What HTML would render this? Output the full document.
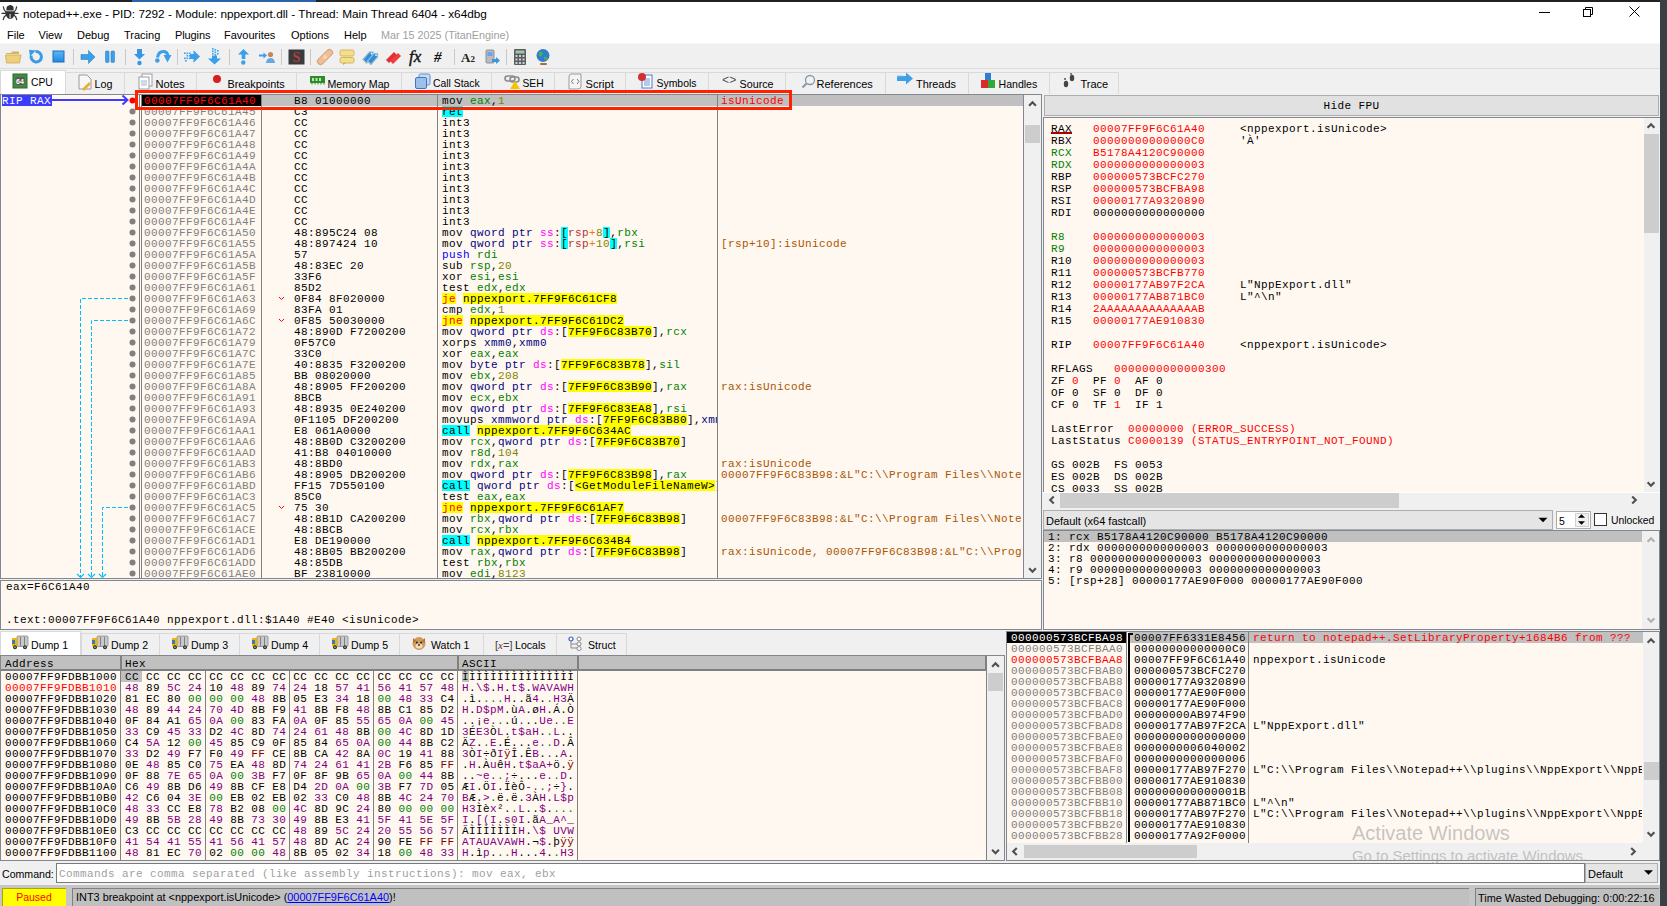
<!DOCTYPE html><html><head><meta charset="utf-8"><style>
*{margin:0;padding:0;box-sizing:border-box}
html,body{width:1667px;height:906px;overflow:hidden;background:#f0f0f0;position:relative}
div{position:absolute}
.s{font-family:'Liberation Sans', sans-serif;font-size:12px;line-height:14px;white-space:pre;color:#000}
.m{font-family:'Liberation Mono', monospace;font-size:11px;letter-spacing:0.4px;line-height:11px;height:11px;white-space:pre;color:#000}
</style></head><body>
<div style="left:0px;top:0px;width:1667px;height:44px;background:#fff"></div>
<div style="left:0px;top:0px;width:1667px;height:2px;background:#1f2224"></div>
<div style="left:132px;top:0px;width:184px;height:2px;background:#2b63a8"></div>
<svg width="22" height="22" viewBox="0 0 22 22" style="position:absolute;left:0px;top:0px"><path d="M6.4 10.6 Q6 6.5 8.2 5.8 Q9.5 5 10.2 5 Q11 5 12.3 5.8 Q14 6.5 13.6 10.6 Z" fill="#333"/><path d="M5.4 11.3 H14.8 Q15.2 15 13 17.5 Q11.5 19 10.1 19 Q8.6 19 7.2 17.5 Q5 15 5.4 11.3Z" fill="#333"/><rect x="9.3" y="13" width="1.7" height="5.5" fill="#a8a8a8"/><path d="M3.4 7 Q3.8 10.5 6 12 M16.6 7 Q16.2 10.5 14 12 M2 13.4 H18 M6 15.3 Q3.8 16.5 3.3 19.5 M14 15.3 Q16.2 16.5 16.7 19.5" stroke="#333" stroke-width="1.3" fill="none" stroke-linecap="round"/></svg>
<div class="s" style="left:23px;top:7px;font-size:11.8px">notepad++.exe - PID: 7292 - Module: nppexport.dll - Thread: Main Thread 6404 - x64dbg</div>
<div style="left:1539px;top:12px;width:11px;height:1px;background:#000"></div>
<svg width="14" height="12" viewBox="0 0 14 12" style="position:absolute;left:1582px;top:6px"><rect x="1.5" y="3.5" width="7" height="7" fill="none" stroke="#000" stroke-width="1"/><path d="M3.5 3.5 V1.5 H10.5 V8.5 H8.5" fill="none" stroke="#000" stroke-width="1"/></svg>
<svg width="14" height="12" viewBox="0 0 14 12" style="position:absolute;left:1628px;top:6px"><path d="M1.5 0.5 L11.5 10.5 M11.5 0.5 L1.5 10.5" stroke="#000" stroke-width="1"/></svg>
<div class="s" style="left:7px;top:28px;font-size:11px;letter-spacing:0px">File</div>
<div class="s" style="left:38.5px;top:28px;font-size:11px;letter-spacing:0px">View</div>
<div class="s" style="left:77px;top:28px;font-size:11px;letter-spacing:0px">Debug</div>
<div class="s" style="left:124px;top:28px;font-size:11px;letter-spacing:0px">Tracing</div>
<div class="s" style="left:175px;top:28px;font-size:11px;letter-spacing:-0.1px">Plugins</div>
<div class="s" style="left:224px;top:28px;font-size:11px;letter-spacing:0px">Favourites</div>
<div class="s" style="left:291px;top:28px;font-size:11px;letter-spacing:0px">Options</div>
<div class="s" style="left:344px;top:28px;font-size:11px;letter-spacing:0px">Help</div>
<div class="s" style="left:381px;top:28px;font-size:10.8px;color:#a0a0a0">Mar 15 2025 (TitanEngine)</div>
<div style="left:0px;top:44px;width:1660px;height:25px;background:#f0f0f0"></div>
<div style="left:0px;top:43px;width:1660px;height:1px;background:#f7f7f7"></div>
<div style="left:0px;top:68px;width:1660px;height:1px;background:#dcdcdc"></div>
<div style="left:73px;top:49px;width:1px;height:16px;background:#c8c8c8"></div>
<div style="left:125px;top:49px;width:1px;height:16px;background:#c8c8c8"></div>
<div style="left:177px;top:49px;width:1px;height:16px;background:#c8c8c8"></div>
<div style="left:229px;top:49px;width:1px;height:16px;background:#c8c8c8"></div>
<div style="left:281px;top:49px;width:1px;height:16px;background:#c8c8c8"></div>
<div style="left:310px;top:49px;width:1px;height:16px;background:#c8c8c8"></div>
<div style="left:454px;top:49px;width:1px;height:16px;background:#c8c8c8"></div>
<div style="left:506px;top:49px;width:1px;height:16px;background:#c8c8c8"></div>
<svg width="17" height="16" viewBox="0 0 17 16" style="position:absolute;left:5px;top:49px"><path d="M1 4 H6 L7.5 2.5 H14 V5 H1Z" fill="#d9b25a"/><path d="M0.5 6 H16 L14.5 14 H1.5 Z" fill="#f0cf7a" stroke="#c9a24a" stroke-width="0.7"/></svg>
<svg width="16" height="16" viewBox="0 0 16 16" style="position:absolute;left:28px;top:49px"><path d="M3.2 6.5 A5.2 5.2 0 1 0 7.5 2.6" fill="none" stroke="#3b9be8" stroke-width="3"/><path d="M1 0.8 L7.8 1.6 L2 7.6 Z" fill="#3b9be8"/></svg>
<svg width="13" height="13" viewBox="0 0 13 13" style="position:absolute;left:52px;top:50px"><defs><linearGradient id="gs" x1="0" y1="0" x2="0" y2="1"><stop offset="0" stop-color="#5fb8f5"/><stop offset="1" stop-color="#1e88e0"/></linearGradient></defs><rect x="1" y="1" width="11" height="11" fill="url(#gs)" stroke="#1a6cc0" stroke-width="1"/></svg>
<svg width="16" height="16" viewBox="0 0 16 16" style="position:absolute;left:80px;top:49px"><path d="M1 5.5 H8.5 V1.5 L15 8 L8.5 14.5 V10.5 H1 Z" fill="#3aa0ea" stroke="#2a80d0" stroke-width="0.6"/></svg>
<svg width="13" height="14" viewBox="0 0 13 14" style="position:absolute;left:104px;top:50px"><rect x="1.5" y="1" width="3.5" height="11.5" rx="1" fill="#3aa0ea" stroke="#2a80d0" stroke-width="0.6"/><rect x="7" y="1" width="3.5" height="11.5" rx="1" fill="#3aa0ea" stroke="#2a80d0" stroke-width="0.6"/></svg>
<svg width="15" height="18" viewBox="0 0 15 18" style="position:absolute;left:132px;top:48px"><path d="M5 1 H10 V6 H13 L7.5 11.5 L2 6 H5 Z" fill="#3597e6"/><circle cx="7.5" cy="15" r="2.2" fill="#3597e6"/></svg>
<svg width="20" height="16" viewBox="0 0 20 16" style="position:absolute;left:153px;top:49px"><path d="M4.5 8.5 Q5.5 2 11 2.5 Q14.5 3 15 7" fill="none" stroke="#3aa0ea" stroke-width="3"/><path d="M10.5 6 H18.5 L14.5 13.5 Z" fill="#3aa0ea"/><circle cx="4.3" cy="11.5" r="2.3" fill="#3aa0ea"/></svg>
<svg width="18" height="16" viewBox="0 0 18 16" style="position:absolute;left:183px;top:49px"><path d="M7 5 H10.5 V1.2 L17 7.5 L10.5 13.8 V10 H7 Z" fill="#3aa0ea"/><g fill="#3aa0ea"><rect x="1" y="3.5" width="1.6" height="1.6"/><rect x="3.5" y="3.5" width="1.6" height="1.6"/><rect x="6" y="3.5" width="1.6" height="1.6"/><rect x="3.5" y="6" width="1.6" height="1.6"/><rect x="6" y="6" width="1.6" height="1.6"/><rect x="1" y="8.5" width="1.6" height="1.6"/><rect x="3.5" y="8.5" width="1.6" height="1.6"/><rect x="6" y="8.5" width="1.6" height="1.6"/><rect x="2" y="11" width="1.6" height="1.6"/></g></svg>
<svg width="16" height="19" viewBox="0 0 16 19" style="position:absolute;left:207px;top:46px"><path d="M5 9.5 H10 V12.5 H14 L7.5 18.5 L1 12.5 H5 Z" fill="#3aa0ea"/><g fill="#3aa0ea"><rect x="5" y="2" width="1.6" height="1.6"/><rect x="7.5" y="3" width="1.6" height="1.6"/><rect x="10" y="4" width="1.6" height="1.6"/><rect x="5" y="4.5" width="1.6" height="1.6"/><rect x="7.5" y="5.5" width="1.6" height="1.6"/><rect x="5" y="7" width="1.6" height="1.6"/><rect x="7.5" y="8" width="1.6" height="1.6"/><rect x="10" y="7" width="1.6" height="1.6"/></g></svg>
<svg width="15" height="18" viewBox="0 0 15 18" style="position:absolute;left:236px;top:48px"><path d="M7.5 1 L13 6.5 H9.3 V11 H5.7 V6.5 H2 Z" fill="#3aa0ea"/><circle cx="7.3" cy="14.5" r="2.2" fill="#3aa0ea"/></svg>
<svg width="18" height="13" viewBox="0 0 18 13" style="position:absolute;left:258px;top:51px"><path d="M1 3.5 H5.5 V1.5 L9 4.5 L5.5 7.5 V5.5 H1 Z" fill="#3aa0ea"/><circle cx="12.5" cy="3.5" r="2.6" fill="#c4875a"/><path d="M8 12 Q8.5 7 12.5 7 Q16.5 7 17 12 Z" fill="#6aa8e0"/></svg>
<svg width="17" height="16" viewBox="0 0 17 16" style="position:absolute;left:288px;top:49px"><rect x="0.5" y="0.5" width="16" height="15" fill="#3a3a3a"/><text x="8.5" y="13" font-family="Liberation Serif" font-weight="bold" font-size="14" fill="#b04040" text-anchor="middle">S</text></svg>
<svg width="20" height="20" viewBox="0 0 20 20" style="position:absolute;left:315px;top:47px"><rect x="0.5" y="6.8" width="19" height="6.4" rx="3.2" transform="rotate(-45 10 10)" fill="#efbd96" stroke="#c98d62" stroke-width="0.8"/><rect x="8.3" y="8.3" width="3.4" height="3.4" transform="rotate(45 10 10)" fill="#f7d7a8"/></svg>
<svg width="17" height="16" viewBox="0 0 17 16" style="position:absolute;left:339px;top:49px"><rect x="1" y="1" width="14" height="6" rx="1.5" fill="#f4e08a" stroke="#c9a94a" stroke-width="0.8"/><rect x="1" y="8.5" width="14" height="5.5" rx="1.5" fill="#f4e08a" stroke="#c9a94a" stroke-width="0.8"/><path d="M4 14 L4 16 L7 14Z" fill="#c9a94a"/></svg>
<svg width="17" height="16" viewBox="0 0 17 16" style="position:absolute;left:362px;top:49px"><path d="M1 10.5 L7.5 3 H11 V6.5 L4.5 14 Z" fill="#2a8ee0" stroke="#9ab8c8" stroke-width="1.2"/><path d="M5.5 12 L12 4.5 H15.5 V8 L9 15.5 Z" fill="#2a8ee0" stroke="#9ab8c8" stroke-width="1.2"/><circle cx="9.6" cy="4.6" r="0.9" fill="#fff"/><circle cx="14" cy="6.1" r="0.9" fill="#fff"/></svg>
<svg width="17" height="16" viewBox="0 0 17 16" style="position:absolute;left:385px;top:49px"><path d="M1 11 L9 3 L12 6 L4 14 Z" fill="#e03030"/><path d="M5 12 L13 4 L16 7 L8 15 Z" fill="#ee3b3b"/></svg>
<div class="s" style="left:409px;top:48px;font-family:'Liberation Serif';font-size:17px;line-height:17px;color:#111;-webkit-text-stroke:0.4px #111"><i>fx</i></div>
<div class="s" style="left:434px;top:49px;font-family:'Liberation Serif';font-weight:bold;font-size:15px;line-height:16px;color:#111;font-style:italic">#</div>
<div class="s" style="left:461px;top:50px;font-family:'Liberation Serif';font-weight:bold;font-size:13px;line-height:16px;color:#222">A<span style='font-size:9px'>2</span></div>
<svg width="17" height="18" viewBox="0 0 17 18" style="position:absolute;left:484px;top:48px"><rect x="2" y="2" width="8" height="13" rx="1" fill="#b8bcc2" stroke="#7a7f86" stroke-width="0.8"/><rect x="3.5" y="4" width="5" height="4" fill="#6aa7e0"/><path d="M8 11 H12 V9 L16 12.5 L12 16 V14 H8 Z" fill="#3597e6"/></svg>
<svg width="15" height="18" viewBox="0 0 15 18" style="position:absolute;left:513px;top:48px"><rect x="1" y="1" width="12" height="16" rx="1" fill="#5a5e62"/><rect x="2.5" y="2.5" width="9" height="3" fill="#9fc8a0"/><g fill="#d0d0d0"><rect x="2.5" y="7" width="2" height="2"/><rect x="6" y="7" width="2" height="2"/><rect x="9.5" y="7" width="2" height="2"/><rect x="2.5" y="10.5" width="2" height="2"/><rect x="6" y="10.5" width="2" height="2"/><rect x="9.5" y="10.5" width="2" height="2"/><rect x="2.5" y="14" width="2" height="2"/><rect x="6" y="14" width="2" height="2"/><rect x="9.5" y="14" width="2" height="2"/></g></svg>
<svg width="17" height="18" viewBox="0 0 17 18" style="position:absolute;left:535px;top:48px"><circle cx="8" cy="7.5" r="6.5" fill="#2f7fd0"/><path d="M4 4 Q7 3 8 6 Q6 9 4 8Z M9 9 Q12 8 13 11 Q10 13 9 11Z" fill="#4fb04a"/><rect x="5" y="15" width="7" height="2" rx="1" fill="#b06a3a"/></svg>
<div style="left:0px;top:70px;width:66px;height:24px;background:#fff;border:1px solid #d9d9d9;border-bottom:none"></div>
<div style="left:65px;top:72px;width:60px;height:22px;background:#f0f0f0;border:1px solid #d9d9d9;border-bottom:none"></div>
<div style="left:124px;top:72px;width:73px;height:22px;background:#f0f0f0;border:1px solid #d9d9d9;border-bottom:none"></div>
<div style="left:196px;top:72px;width:101px;height:22px;background:#f0f0f0;border:1px solid #d9d9d9;border-bottom:none"></div>
<div style="left:296px;top:72px;width:106px;height:22px;background:#f0f0f0;border:1px solid #d9d9d9;border-bottom:none"></div>
<div style="left:401px;top:72px;width:91px;height:22px;background:#f0f0f0;border:1px solid #d9d9d9;border-bottom:none"></div>
<div style="left:491px;top:72px;width:64px;height:22px;background:#f0f0f0;border:1px solid #d9d9d9;border-bottom:none"></div>
<div style="left:554px;top:72px;width:72px;height:22px;background:#f0f0f0;border:1px solid #d9d9d9;border-bottom:none"></div>
<div style="left:625px;top:72px;width:84px;height:22px;background:#f0f0f0;border:1px solid #d9d9d9;border-bottom:none"></div>
<div style="left:708px;top:72px;width:78px;height:22px;background:#f0f0f0;border:1px solid #d9d9d9;border-bottom:none"></div>
<div style="left:785px;top:72px;width:101px;height:22px;background:#f0f0f0;border:1px solid #d9d9d9;border-bottom:none"></div>
<div style="left:885px;top:72px;width:84px;height:22px;background:#f0f0f0;border:1px solid #d9d9d9;border-bottom:none"></div>
<div style="left:968px;top:72px;width:82px;height:22px;background:#f0f0f0;border:1px solid #d9d9d9;border-bottom:none"></div>
<div style="left:1049px;top:72px;width:70px;height:22px;background:#f0f0f0;border:1px solid #d9d9d9;border-bottom:none"></div>
<div class="s" style="left:31.0px;top:76px;font-size:10.30px">CPU</div>
<div class="s" style="left:94.5px;top:77px;font-size:10.73px">Log</div>
<div class="s" style="left:155.5px;top:77px;font-size:11.18px">Notes</div>
<div class="s" style="left:227.5px;top:77px;font-size:10.83px">Breakpoints</div>
<div class="s" style="left:327.5px;top:77px;font-size:10.63px">Memory Map</div>
<div class="s" style="left:433.0px;top:77px;font-size:10.37px">Call Stack</div>
<div class="s" style="left:522.5px;top:77px;font-size:10.30px">SEH</div>
<div class="s" style="left:585.5px;top:77px;font-size:11.07px">Script</div>
<div class="s" style="left:656.5px;top:77px;font-size:10.43px">Symbols</div>
<div class="s" style="left:739.5px;top:77px;font-size:10.76px">Source</div>
<div class="s" style="left:816.5px;top:77px;font-size:11.03px">References</div>
<div class="s" style="left:916.0px;top:77px;font-size:10.88px">Threads</div>
<div class="s" style="left:998.5px;top:77px;font-size:10.57px">Handles</div>
<div class="s" style="left:1080.5px;top:77px;font-size:11.00px">Trace</div>
<svg width="16" height="16" viewBox="0 0 16 16" style="position:absolute;left:12px;top:73px"><rect x="1" y="1" width="14" height="14" fill="#3f8f3a" stroke="#2a6a28" stroke-width="1"/><rect x="3.5" y="4" width="9" height="8" fill="#5a5a5a"/><text x="8" y="11" font-family="Liberation Sans" font-size="7" font-weight="bold" fill="#fff" text-anchor="middle">64</text></svg>
<svg width="16" height="17" viewBox="0 0 16 17" style="position:absolute;left:77px;top:74px"><path d="M2 1 H10 L14 5 V15 H2 Z" fill="#f7f7f7" stroke="#9a9a9a" stroke-width="1"/><path d="M5 15 L12 8 L14 10 L7 17 Z" fill="#e9b040"/></svg>
<svg width="17" height="17" viewBox="0 0 17 17" style="position:absolute;left:137px;top:73px"><rect x="5" y="1" width="10" height="12" fill="#fff" stroke="#9a9aa8" stroke-width="1"/><rect x="2" y="4" width="10" height="12" fill="#fff" stroke="#9a9aa8" stroke-width="1"/><path d="M4 8 H10 M4 10 H10 M4 12 H10" stroke="#8aa0c0" stroke-width="0.8"/></svg>
<svg width="10" height="10" viewBox="0 0 10 10" style="position:absolute;left:212px;top:74px"><circle cx="5" cy="5" r="4" fill="#d81e1e"/></svg>
<svg width="17" height="10" viewBox="0 0 17 10" style="position:absolute;left:309px;top:75px"><rect x="1" y="1" width="15" height="7" fill="#2f8a2a"/><path d="M3 8 V9.5 M6 8 V9.5 M9 8 V9.5 M12 8 V9.5 M15 8 V9.5" stroke="#2f8a2a"/><g fill="#bde3b0"><rect x="3" y="3" width="2" height="3"/><rect x="6.5" y="3" width="2" height="3"/><rect x="10" y="3" width="2" height="3"/></g></svg>
<svg width="17" height="17" viewBox="0 0 17 17" style="position:absolute;left:414px;top:73px"><rect x="5" y="1" width="11" height="11" rx="1.5" fill="#c5daf2" stroke="#5b8fd0" stroke-width="1"/><rect x="1.5" y="4.5" width="11" height="11" rx="1.5" fill="#9cc0ea" stroke="#3f78c0" stroke-width="1"/></svg>
<svg width="17" height="16" viewBox="0 0 17 16" style="position:absolute;left:504px;top:74px"><rect x="1" y="2" width="10" height="5" rx="2.5" fill="none" stroke="#8a8a8a" stroke-width="1.6"/><rect x="6" y="3" width="9" height="5" rx="2.5" fill="none" stroke="#8a8a8a" stroke-width="1.6"/><path d="M11 7 L16 15 H6 Z" fill="#f2c500"/></svg>
<svg width="15" height="17" viewBox="0 0 15 17" style="position:absolute;left:568px;top:73px"><path d="M3 1 H13 V13 Q13 16 10 16 H1 V4 Q1 1 3 1Z" fill="#f5f5f5" stroke="#9a9a9a" stroke-width="1"/><path d="M5.5 6 L3.5 8.5 L5.5 11 M9 6 L11 8.5 L9 11" stroke="#666" fill="none" stroke-width="0.9"/></svg>
<svg width="17" height="17" viewBox="0 0 17 17" style="position:absolute;left:637px;top:72px"><rect x="5" y="3" width="10" height="13" fill="#fff" stroke="#4b78c8" stroke-width="1"/><path d="M7 7 H13 M7 9 H13 M7 11 H13 M7 13 H13" stroke="#4b78c8" stroke-width="0.8"/><circle cx="5" cy="5" r="4" fill="#d43030"/></svg>
<div class="s" style="left:722px;top:75px;font-family:'Liberation Mono';font-size:12px;color:#555;line-height:12px">&lt;&gt;</div>
<svg width="15" height="15" viewBox="0 0 15 15" style="position:absolute;left:801px;top:74px"><circle cx="9" cy="6" r="4.5" fill="#eef3f8" stroke="#8a96a6" stroke-width="1.3"/><path d="M5.5 9.5 L1.5 13.5" stroke="#8a96a6" stroke-width="2"/></svg>
<svg width="18" height="14" viewBox="0 0 18 14" style="position:absolute;left:896px;top:72px"><path d="M1 4 H10 V0.5 L17 6.5 L10 12.5 V9 H1 Z" fill="#3fa0e8"/><path d="M1 4 L7 4" stroke="#7cc4f2"/></svg>
<svg width="16" height="18" viewBox="0 0 16 18" style="position:absolute;left:980px;top:72px"><rect x="5" y="1" width="6" height="7" fill="#2f7fd0"/><rect x="1" y="8" width="7" height="8" fill="#e02828"/><rect x="8" y="8" width="7" height="8" fill="#2faa3a"/></svg>
<svg width="14" height="16" viewBox="0 0 14 16" style="position:absolute;left:1062px;top:73px"><ellipse cx="4" cy="11" rx="2.2" ry="3.2" fill="#444"/><ellipse cx="10" cy="5" rx="2.2" ry="3.2" fill="#444"/><circle cx="3" cy="6" r="0.9" fill="#444"/><circle cx="9" cy="0.9" r="0.9" fill="#444"/></svg>
<div style="left:0px;top:94px;width:1042px;height:485px;background:#fff8f0;border:1px solid #828790"></div>
<div style="left:141px;top:95px;width:882px;height:11px;background:#c0c0c0"></div>
<div style="left:142px;top:95px;width:119px;height:11px;background:#000"></div>
<div style="left:139px;top:95px;width:1px;height:483px;background:#808080"></div>
<div style="left:141px;top:95px;width:1px;height:483px;background:#808080"></div>
<div style="left:261px;top:95px;width:1px;height:483px;background:#808080"></div>
<div style="left:437px;top:95px;width:1px;height:483px;background:#808080"></div>
<div style="left:717px;top:95px;width:1px;height:483px;background:#808080"></div>
<div class="m" style="top:96px;left:144px;"><span style="color:#ff0000">00007FF9F6C61A40</span></div>
<div class="m" style="top:96px;left:294px;"><span style="color:#000">B8 01000000</span></div>
<div class="m" style="top:96px;left:442px;width:275px;overflow:hidden;"><span style="color:#000000">mov </span><span style="color:#008000">eax</span><span style="color:#000000">,</span><span style="color:#828200">1</span></div>
<div class="m" style="top:96px;left:721px;width:300px;overflow:hidden;"><span style="color:#ff0000">isUnicode</span></div>
<div class="m" style="top:107px;left:144px;"><span style="color:#808080">00007FF9F6C61A45</span></div>
<div class="m" style="top:107px;left:294px;"><span style="color:#000">C3</span></div>
<div style="left:442px;top:106px;width:21px;height:11px;background:#00ffff"></div>
<div class="m" style="top:107px;left:442px;width:275px;overflow:hidden;"><span style="color:#000000">ret</span></div>
<div class="m" style="top:118px;left:144px;"><span style="color:#808080">00007FF9F6C61A46</span></div>
<div class="m" style="top:118px;left:294px;"><span style="color:#000">CC</span></div>
<div class="m" style="top:118px;left:442px;width:275px;overflow:hidden;"><span style="color:#000000">int3</span></div>
<div class="m" style="top:129px;left:144px;"><span style="color:#808080">00007FF9F6C61A47</span></div>
<div class="m" style="top:129px;left:294px;"><span style="color:#000">CC</span></div>
<div class="m" style="top:129px;left:442px;width:275px;overflow:hidden;"><span style="color:#000000">int3</span></div>
<div class="m" style="top:140px;left:144px;"><span style="color:#808080">00007FF9F6C61A48</span></div>
<div class="m" style="top:140px;left:294px;"><span style="color:#000">CC</span></div>
<div class="m" style="top:140px;left:442px;width:275px;overflow:hidden;"><span style="color:#000000">int3</span></div>
<div class="m" style="top:151px;left:144px;"><span style="color:#808080">00007FF9F6C61A49</span></div>
<div class="m" style="top:151px;left:294px;"><span style="color:#000">CC</span></div>
<div class="m" style="top:151px;left:442px;width:275px;overflow:hidden;"><span style="color:#000000">int3</span></div>
<div class="m" style="top:162px;left:144px;"><span style="color:#808080">00007FF9F6C61A4A</span></div>
<div class="m" style="top:162px;left:294px;"><span style="color:#000">CC</span></div>
<div class="m" style="top:162px;left:442px;width:275px;overflow:hidden;"><span style="color:#000000">int3</span></div>
<div class="m" style="top:173px;left:144px;"><span style="color:#808080">00007FF9F6C61A4B</span></div>
<div class="m" style="top:173px;left:294px;"><span style="color:#000">CC</span></div>
<div class="m" style="top:173px;left:442px;width:275px;overflow:hidden;"><span style="color:#000000">int3</span></div>
<div class="m" style="top:184px;left:144px;"><span style="color:#808080">00007FF9F6C61A4C</span></div>
<div class="m" style="top:184px;left:294px;"><span style="color:#000">CC</span></div>
<div class="m" style="top:184px;left:442px;width:275px;overflow:hidden;"><span style="color:#000000">int3</span></div>
<div class="m" style="top:195px;left:144px;"><span style="color:#808080">00007FF9F6C61A4D</span></div>
<div class="m" style="top:195px;left:294px;"><span style="color:#000">CC</span></div>
<div class="m" style="top:195px;left:442px;width:275px;overflow:hidden;"><span style="color:#000000">int3</span></div>
<div class="m" style="top:206px;left:144px;"><span style="color:#808080">00007FF9F6C61A4E</span></div>
<div class="m" style="top:206px;left:294px;"><span style="color:#000">CC</span></div>
<div class="m" style="top:206px;left:442px;width:275px;overflow:hidden;"><span style="color:#000000">int3</span></div>
<div class="m" style="top:217px;left:144px;"><span style="color:#808080">00007FF9F6C61A4F</span></div>
<div class="m" style="top:217px;left:294px;"><span style="color:#000">CC</span></div>
<div class="m" style="top:217px;left:442px;width:275px;overflow:hidden;"><span style="color:#000000">int3</span></div>
<div class="m" style="top:228px;left:144px;"><span style="color:#808080">00007FF9F6C61A50</span></div>
<div class="m" style="top:228px;left:294px;"><span style="color:#000">48:895C24 08</span></div>
<div style="left:561px;top:227px;width:7px;height:11px;background:#00ffff"></div>
<div style="left:603px;top:227px;width:7px;height:11px;background:#00ffff"></div>
<div class="m" style="top:228px;left:442px;width:275px;overflow:hidden;"><span style="color:#000000">mov </span><span style="color:#000080">qword ptr </span><span style="color:#ff00ff">ss</span><span style="color:#000000">:</span><span style="color:#000000">[</span><span style="color:#b03434">rsp</span><span style="color:#f27711">+</span><span style="color:#828200">8</span><span style="color:#000000">]</span><span style="color:#000000">,</span><span style="color:#008000">rbx</span></div>
<div class="m" style="top:239px;left:144px;"><span style="color:#808080">00007FF9F6C61A55</span></div>
<div class="m" style="top:239px;left:294px;"><span style="color:#000">48:897424 10</span></div>
<div style="left:561px;top:238px;width:7px;height:11px;background:#00ffff"></div>
<div style="left:610px;top:238px;width:7px;height:11px;background:#00ffff"></div>
<div class="m" style="top:239px;left:442px;width:275px;overflow:hidden;"><span style="color:#000000">mov </span><span style="color:#000080">qword ptr </span><span style="color:#ff00ff">ss</span><span style="color:#000000">:</span><span style="color:#000000">[</span><span style="color:#b03434">rsp</span><span style="color:#f27711">+</span><span style="color:#828200">10</span><span style="color:#000000">]</span><span style="color:#000000">,</span><span style="color:#008000">rsi</span></div>
<div class="m" style="top:239px;left:721px;width:300px;overflow:hidden;"><span style="color:#aa5500">[rsp+10]:isUnicode</span></div>
<div class="m" style="top:250px;left:144px;"><span style="color:#808080">00007FF9F6C61A5A</span></div>
<div class="m" style="top:250px;left:294px;"><span style="color:#000">57</span></div>
<div class="m" style="top:250px;left:442px;width:275px;overflow:hidden;"><span style="color:#0000ff">push </span><span style="color:#008000">rdi</span></div>
<div class="m" style="top:261px;left:144px;"><span style="color:#808080">00007FF9F6C61A5B</span></div>
<div class="m" style="top:261px;left:294px;"><span style="color:#000">48:83EC 20</span></div>
<div class="m" style="top:261px;left:442px;width:275px;overflow:hidden;"><span style="color:#000000">sub </span><span style="color:#008000">rsp</span><span style="color:#000000">,</span><span style="color:#828200">20</span></div>
<div class="m" style="top:272px;left:144px;"><span style="color:#808080">00007FF9F6C61A5F</span></div>
<div class="m" style="top:272px;left:294px;"><span style="color:#000">33F6</span></div>
<div class="m" style="top:272px;left:442px;width:275px;overflow:hidden;"><span style="color:#000000">xor </span><span style="color:#008000">esi</span><span style="color:#000000">,</span><span style="color:#008000">esi</span></div>
<div class="m" style="top:283px;left:144px;"><span style="color:#808080">00007FF9F6C61A61</span></div>
<div class="m" style="top:283px;left:294px;"><span style="color:#000">85D2</span></div>
<div class="m" style="top:283px;left:442px;width:275px;overflow:hidden;"><span style="color:#000000">test </span><span style="color:#008000">edx</span><span style="color:#000000">,</span><span style="color:#008000">edx</span></div>
<div class="m" style="top:294px;left:144px;"><span style="color:#808080">00007FF9F6C61A63</span></div>
<div class="m" style="top:294px;left:294px;"><span style="color:#000">0F84 8F020000</span></div>
<div style="left:442px;top:293px;width:14px;height:11px;background:#ffff00"></div>
<div style="left:463px;top:293px;width:154px;height:11px;background:#ffff00"></div>
<div class="m" style="top:294px;left:442px;width:275px;overflow:hidden;"><span style="color:#ff0000">je</span><span style="color:#000000"> </span><span style="color:#000000">nppexport.7FF9F6C61CF8</span></div>
<div class="m" style="top:305px;left:144px;"><span style="color:#808080">00007FF9F6C61A69</span></div>
<div class="m" style="top:305px;left:294px;"><span style="color:#000">83FA 01</span></div>
<div class="m" style="top:305px;left:442px;width:275px;overflow:hidden;"><span style="color:#000000">cmp </span><span style="color:#008000">edx</span><span style="color:#000000">,</span><span style="color:#828200">1</span></div>
<div class="m" style="top:316px;left:144px;"><span style="color:#808080">00007FF9F6C61A6C</span></div>
<div class="m" style="top:316px;left:294px;"><span style="color:#000">0F85 50030000</span></div>
<div style="left:442px;top:315px;width:21px;height:11px;background:#ffff00"></div>
<div style="left:470px;top:315px;width:154px;height:11px;background:#ffff00"></div>
<div class="m" style="top:316px;left:442px;width:275px;overflow:hidden;"><span style="color:#ff0000">jne</span><span style="color:#000000"> </span><span style="color:#000000">nppexport.7FF9F6C61DC2</span></div>
<div class="m" style="top:327px;left:144px;"><span style="color:#808080">00007FF9F6C61A72</span></div>
<div class="m" style="top:327px;left:294px;"><span style="color:#000">48:890D F7200200</span></div>
<div style="left:568px;top:326px;width:84px;height:11px;background:#ffff00"></div>
<div class="m" style="top:327px;left:442px;width:275px;overflow:hidden;"><span style="color:#000000">mov </span><span style="color:#000080">qword ptr </span><span style="color:#ff00ff">ds</span><span style="color:#000000">:</span><span style="color:#000000">[</span><span style="color:#000000">7FF9F6C83B70</span><span style="color:#000000">]</span><span style="color:#000000">,</span><span style="color:#008000">rcx</span></div>
<div class="m" style="top:338px;left:144px;"><span style="color:#808080">00007FF9F6C61A79</span></div>
<div class="m" style="top:338px;left:294px;"><span style="color:#000">0F57C0</span></div>
<div class="m" style="top:338px;left:442px;width:275px;overflow:hidden;"><span style="color:#000000">xorps </span><span style="color:#000080">xmm0</span><span style="color:#000000">,</span><span style="color:#000080">xmm0</span></div>
<div class="m" style="top:349px;left:144px;"><span style="color:#808080">00007FF9F6C61A7C</span></div>
<div class="m" style="top:349px;left:294px;"><span style="color:#000">33C0</span></div>
<div class="m" style="top:349px;left:442px;width:275px;overflow:hidden;"><span style="color:#000000">xor </span><span style="color:#008000">eax</span><span style="color:#000000">,</span><span style="color:#008000">eax</span></div>
<div class="m" style="top:360px;left:144px;"><span style="color:#808080">00007FF9F6C61A7E</span></div>
<div class="m" style="top:360px;left:294px;"><span style="color:#000">40:8835 F3200200</span></div>
<div style="left:561px;top:359px;width:84px;height:11px;background:#ffff00"></div>
<div class="m" style="top:360px;left:442px;width:275px;overflow:hidden;"><span style="color:#000000">mov </span><span style="color:#000080">byte ptr </span><span style="color:#ff00ff">ds</span><span style="color:#000000">:</span><span style="color:#000000">[</span><span style="color:#000000">7FF9F6C83B78</span><span style="color:#000000">]</span><span style="color:#000000">,</span><span style="color:#008000">sil</span></div>
<div class="m" style="top:371px;left:144px;"><span style="color:#808080">00007FF9F6C61A85</span></div>
<div class="m" style="top:371px;left:294px;"><span style="color:#000">BB 08020000</span></div>
<div class="m" style="top:371px;left:442px;width:275px;overflow:hidden;"><span style="color:#000000">mov </span><span style="color:#008000">ebx</span><span style="color:#000000">,</span><span style="color:#828200">208</span></div>
<div class="m" style="top:382px;left:144px;"><span style="color:#808080">00007FF9F6C61A8A</span></div>
<div class="m" style="top:382px;left:294px;"><span style="color:#000">48:8905 FF200200</span></div>
<div style="left:568px;top:381px;width:84px;height:11px;background:#ffff00"></div>
<div class="m" style="top:382px;left:442px;width:275px;overflow:hidden;"><span style="color:#000000">mov </span><span style="color:#000080">qword ptr </span><span style="color:#ff00ff">ds</span><span style="color:#000000">:</span><span style="color:#000000">[</span><span style="color:#000000">7FF9F6C83B90</span><span style="color:#000000">]</span><span style="color:#000000">,</span><span style="color:#008000">rax</span></div>
<div class="m" style="top:382px;left:721px;width:300px;overflow:hidden;"><span style="color:#aa5500">rax:isUnicode</span></div>
<div class="m" style="top:393px;left:144px;"><span style="color:#808080">00007FF9F6C61A91</span></div>
<div class="m" style="top:393px;left:294px;"><span style="color:#000">8BCB</span></div>
<div class="m" style="top:393px;left:442px;width:275px;overflow:hidden;"><span style="color:#000000">mov </span><span style="color:#008000">ecx</span><span style="color:#000000">,</span><span style="color:#008000">ebx</span></div>
<div class="m" style="top:404px;left:144px;"><span style="color:#808080">00007FF9F6C61A93</span></div>
<div class="m" style="top:404px;left:294px;"><span style="color:#000">48:8935 0E240200</span></div>
<div style="left:568px;top:403px;width:84px;height:11px;background:#ffff00"></div>
<div class="m" style="top:404px;left:442px;width:275px;overflow:hidden;"><span style="color:#000000">mov </span><span style="color:#000080">qword ptr </span><span style="color:#ff00ff">ds</span><span style="color:#000000">:</span><span style="color:#000000">[</span><span style="color:#000000">7FF9F6C83EA8</span><span style="color:#000000">]</span><span style="color:#000000">,</span><span style="color:#008000">rsi</span></div>
<div class="m" style="top:415px;left:144px;"><span style="color:#808080">00007FF9F6C61A9A</span></div>
<div class="m" style="top:415px;left:294px;"><span style="color:#000">0F1105 DF200200</span></div>
<div style="left:603px;top:414px;width:84px;height:11px;background:#ffff00"></div>
<div class="m" style="top:415px;left:442px;width:275px;overflow:hidden;"><span style="color:#000000">movups </span><span style="color:#000080">xmmword ptr </span><span style="color:#ff00ff">ds</span><span style="color:#000000">:</span><span style="color:#000000">[</span><span style="color:#000000">7FF9F6C83B80</span><span style="color:#000000">]</span><span style="color:#000000">,</span><span style="color:#000080">xmm0</span></div>
<div class="m" style="top:426px;left:144px;"><span style="color:#808080">00007FF9F6C61AA1</span></div>
<div class="m" style="top:426px;left:294px;"><span style="color:#000">E8 061A0000</span></div>
<div style="left:442px;top:425px;width:28px;height:11px;background:#00ffff"></div>
<div style="left:477px;top:425px;width:154px;height:11px;background:#ffff00"></div>
<div class="m" style="top:426px;left:442px;width:275px;overflow:hidden;"><span style="color:#000000">call</span><span style="color:#000000"> </span><span style="color:#000000">nppexport.7FF9F6C634AC</span></div>
<div class="m" style="top:437px;left:144px;"><span style="color:#808080">00007FF9F6C61AA6</span></div>
<div class="m" style="top:437px;left:294px;"><span style="color:#000">48:8B0D C3200200</span></div>
<div style="left:596px;top:436px;width:84px;height:11px;background:#ffff00"></div>
<div class="m" style="top:437px;left:442px;width:275px;overflow:hidden;"><span style="color:#000000">mov </span><span style="color:#008000">rcx</span><span style="color:#000000">,</span><span style="color:#000080">qword ptr </span><span style="color:#ff00ff">ds</span><span style="color:#000000">:</span><span style="color:#000000">[</span><span style="color:#000000">7FF9F6C83B70</span><span style="color:#000000">]</span></div>
<div class="m" style="top:448px;left:144px;"><span style="color:#808080">00007FF9F6C61AAD</span></div>
<div class="m" style="top:448px;left:294px;"><span style="color:#000">41:B8 04010000</span></div>
<div class="m" style="top:448px;left:442px;width:275px;overflow:hidden;"><span style="color:#000000">mov </span><span style="color:#008000">r8d</span><span style="color:#000000">,</span><span style="color:#828200">104</span></div>
<div class="m" style="top:459px;left:144px;"><span style="color:#808080">00007FF9F6C61AB3</span></div>
<div class="m" style="top:459px;left:294px;"><span style="color:#000">48:8BD0</span></div>
<div class="m" style="top:459px;left:442px;width:275px;overflow:hidden;"><span style="color:#000000">mov </span><span style="color:#008000">rdx</span><span style="color:#000000">,</span><span style="color:#008000">rax</span></div>
<div class="m" style="top:459px;left:721px;width:300px;overflow:hidden;"><span style="color:#aa5500">rax:isUnicode</span></div>
<div class="m" style="top:470px;left:144px;"><span style="color:#808080">00007FF9F6C61AB6</span></div>
<div class="m" style="top:470px;left:294px;"><span style="color:#000">48:8905 DB200200</span></div>
<div style="left:568px;top:469px;width:84px;height:11px;background:#ffff00"></div>
<div class="m" style="top:470px;left:442px;width:275px;overflow:hidden;"><span style="color:#000000">mov </span><span style="color:#000080">qword ptr </span><span style="color:#ff00ff">ds</span><span style="color:#000000">:</span><span style="color:#000000">[</span><span style="color:#000000">7FF9F6C83B98</span><span style="color:#000000">]</span><span style="color:#000000">,</span><span style="color:#008000">rax</span></div>
<div class="m" style="top:470px;left:721px;width:300px;overflow:hidden;"><span style="color:#aa5500">00007FF9F6C83B98:&amp;L"C:\\Program Files\\Notepad++\\plugins</span></div>
<div class="m" style="top:481px;left:144px;"><span style="color:#808080">00007FF9F6C61ABD</span></div>
<div class="m" style="top:481px;left:294px;"><span style="color:#000">FF15 7D550100</span></div>
<div style="left:442px;top:480px;width:28px;height:11px;background:#00ffff"></div>
<div style="left:575px;top:480px;width:140px;height:11px;background:#ffff00"></div>
<div class="m" style="top:481px;left:442px;width:275px;overflow:hidden;"><span style="color:#000000">call</span><span style="color:#000000"> </span><span style="color:#000080">qword ptr </span><span style="color:#ff00ff">ds</span><span style="color:#000000">:</span><span style="color:#000000">[</span><span style="color:#000000">&lt;GetModuleFileNameW&gt;</span><span style="color:#000000">]</span></div>
<div class="m" style="top:492px;left:144px;"><span style="color:#808080">00007FF9F6C61AC3</span></div>
<div class="m" style="top:492px;left:294px;"><span style="color:#000">85C0</span></div>
<div class="m" style="top:492px;left:442px;width:275px;overflow:hidden;"><span style="color:#000000">test </span><span style="color:#008000">eax</span><span style="color:#000000">,</span><span style="color:#008000">eax</span></div>
<div class="m" style="top:503px;left:144px;"><span style="color:#808080">00007FF9F6C61AC5</span></div>
<div class="m" style="top:503px;left:294px;"><span style="color:#000">75 30</span></div>
<div style="left:442px;top:502px;width:21px;height:11px;background:#ffff00"></div>
<div style="left:470px;top:502px;width:154px;height:11px;background:#ffff00"></div>
<div class="m" style="top:503px;left:442px;width:275px;overflow:hidden;"><span style="color:#ff0000">jne</span><span style="color:#000000"> </span><span style="color:#000000">nppexport.7FF9F6C61AF7</span></div>
<div class="m" style="top:514px;left:144px;"><span style="color:#808080">00007FF9F6C61AC7</span></div>
<div class="m" style="top:514px;left:294px;"><span style="color:#000">48:8B1D CA200200</span></div>
<div style="left:596px;top:513px;width:84px;height:11px;background:#ffff00"></div>
<div class="m" style="top:514px;left:442px;width:275px;overflow:hidden;"><span style="color:#000000">mov </span><span style="color:#008000">rbx</span><span style="color:#000000">,</span><span style="color:#000080">qword ptr </span><span style="color:#ff00ff">ds</span><span style="color:#000000">:</span><span style="color:#000000">[</span><span style="color:#000000">7FF9F6C83B98</span><span style="color:#000000">]</span></div>
<div class="m" style="top:514px;left:721px;width:300px;overflow:hidden;"><span style="color:#aa5500">00007FF9F6C83B98:&amp;L"C:\\Program Files\\Notepad++\\plugins</span></div>
<div class="m" style="top:525px;left:144px;"><span style="color:#808080">00007FF9F6C61ACE</span></div>
<div class="m" style="top:525px;left:294px;"><span style="color:#000">48:8BCB</span></div>
<div class="m" style="top:525px;left:442px;width:275px;overflow:hidden;"><span style="color:#000000">mov </span><span style="color:#008000">rcx</span><span style="color:#000000">,</span><span style="color:#008000">rbx</span></div>
<div class="m" style="top:536px;left:144px;"><span style="color:#808080">00007FF9F6C61AD1</span></div>
<div class="m" style="top:536px;left:294px;"><span style="color:#000">E8 DE190000</span></div>
<div style="left:442px;top:535px;width:28px;height:11px;background:#00ffff"></div>
<div style="left:477px;top:535px;width:154px;height:11px;background:#ffff00"></div>
<div class="m" style="top:536px;left:442px;width:275px;overflow:hidden;"><span style="color:#000000">call</span><span style="color:#000000"> </span><span style="color:#000000">nppexport.7FF9F6C634B4</span></div>
<div class="m" style="top:547px;left:144px;"><span style="color:#808080">00007FF9F6C61AD6</span></div>
<div class="m" style="top:547px;left:294px;"><span style="color:#000">48:8B05 BB200200</span></div>
<div style="left:596px;top:546px;width:84px;height:11px;background:#ffff00"></div>
<div class="m" style="top:547px;left:442px;width:275px;overflow:hidden;"><span style="color:#000000">mov </span><span style="color:#008000">rax</span><span style="color:#000000">,</span><span style="color:#000080">qword ptr </span><span style="color:#ff00ff">ds</span><span style="color:#000000">:</span><span style="color:#000000">[</span><span style="color:#000000">7FF9F6C83B98</span><span style="color:#000000">]</span></div>
<div class="m" style="top:547px;left:721px;width:300px;overflow:hidden;"><span style="color:#aa5500">rax:isUnicode, 00007FF9F6C83B98:&amp;L"C:\\Program Files</span></div>
<div class="m" style="top:558px;left:144px;"><span style="color:#808080">00007FF9F6C61ADD</span></div>
<div class="m" style="top:558px;left:294px;"><span style="color:#000">48:85DB</span></div>
<div class="m" style="top:558px;left:442px;width:275px;overflow:hidden;"><span style="color:#000000">test </span><span style="color:#008000">rbx</span><span style="color:#000000">,</span><span style="color:#008000">rbx</span></div>
<div class="m" style="top:569px;left:144px;"><span style="color:#808080">00007FF9F6C61AE0</span></div>
<div class="m" style="top:569px;left:294px;"><span style="color:#000">BF 23810000</span></div>
<div class="m" style="top:569px;left:442px;width:275px;overflow:hidden;"><span style="color:#000000">mov </span><span style="color:#008000">edi</span><span style="color:#000000">,</span><span style="color:#828200">8123</span></div>
<svg width="1667" height="906" style="position:absolute;left:0;top:0"><circle cx="132.5" cy="100.5" r="3" fill="#ff0000"/><circle cx="132.5" cy="111.5" r="3" fill="#808080"/><circle cx="132.5" cy="122.5" r="3" fill="#808080"/><circle cx="132.5" cy="133.5" r="3" fill="#808080"/><circle cx="132.5" cy="144.5" r="3" fill="#808080"/><circle cx="132.5" cy="155.5" r="3" fill="#808080"/><circle cx="132.5" cy="166.5" r="3" fill="#808080"/><circle cx="132.5" cy="177.5" r="3" fill="#808080"/><circle cx="132.5" cy="188.5" r="3" fill="#808080"/><circle cx="132.5" cy="199.5" r="3" fill="#808080"/><circle cx="132.5" cy="210.5" r="3" fill="#808080"/><circle cx="132.5" cy="221.5" r="3" fill="#808080"/><circle cx="132.5" cy="232.5" r="3" fill="#808080"/><circle cx="132.5" cy="243.5" r="3" fill="#808080"/><circle cx="132.5" cy="254.5" r="3" fill="#808080"/><circle cx="132.5" cy="265.5" r="3" fill="#808080"/><circle cx="132.5" cy="276.5" r="3" fill="#808080"/><circle cx="132.5" cy="287.5" r="3" fill="#808080"/><circle cx="132.5" cy="298.5" r="3" fill="#808080"/><circle cx="132.5" cy="309.5" r="3" fill="#808080"/><circle cx="132.5" cy="320.5" r="3" fill="#808080"/><circle cx="132.5" cy="331.5" r="3" fill="#808080"/><circle cx="132.5" cy="342.5" r="3" fill="#808080"/><circle cx="132.5" cy="353.5" r="3" fill="#808080"/><circle cx="132.5" cy="364.5" r="3" fill="#808080"/><circle cx="132.5" cy="375.5" r="3" fill="#808080"/><circle cx="132.5" cy="386.5" r="3" fill="#808080"/><circle cx="132.5" cy="397.5" r="3" fill="#808080"/><circle cx="132.5" cy="408.5" r="3" fill="#808080"/><circle cx="132.5" cy="419.5" r="3" fill="#808080"/><circle cx="132.5" cy="430.5" r="3" fill="#808080"/><circle cx="132.5" cy="441.5" r="3" fill="#808080"/><circle cx="132.5" cy="452.5" r="3" fill="#808080"/><circle cx="132.5" cy="463.5" r="3" fill="#808080"/><circle cx="132.5" cy="474.5" r="3" fill="#808080"/><circle cx="132.5" cy="485.5" r="3" fill="#808080"/><circle cx="132.5" cy="496.5" r="3" fill="#808080"/><circle cx="132.5" cy="507.5" r="3" fill="#808080"/><circle cx="132.5" cy="518.5" r="3" fill="#808080"/><circle cx="132.5" cy="529.5" r="3" fill="#808080"/><circle cx="132.5" cy="540.5" r="3" fill="#808080"/><circle cx="132.5" cy="551.5" r="3" fill="#808080"/><circle cx="132.5" cy="562.5" r="3" fill="#808080"/><circle cx="132.5" cy="573.5" r="3" fill="#808080"/><path d="M128 298.5 H80.5 V577" stroke="#00bfff" stroke-width="1" fill="none" stroke-dasharray="4 2"/><path d="M77 574 L80.5 577.5 L84 574" stroke="#00bfff" stroke-width="1.2" fill="none"/><path d="M128 320.5 H91.5 V577" stroke="#00bfff" stroke-width="1" fill="none" stroke-dasharray="4 2"/><path d="M88 574 L91.5 577.5 L95 574" stroke="#00bfff" stroke-width="1.2" fill="none"/><path d="M128 507.5 H102.5 V577" stroke="#00bfff" stroke-width="1" fill="none" stroke-dasharray="4 2"/><path d="M99 574 L102.5 577.5 L106 574" stroke="#00bfff" stroke-width="1.2" fill="none"/><path d="M52 100 H127" stroke="#3c3cff" stroke-width="2" fill="none"/><path d="M122.5 95.5 L127.5 100 L122.5 104.5" stroke="#3c3cff" stroke-width="2" fill="none"/><path d="M279 297 L281.5 299.5 L284 297" stroke="#ff0000" stroke-width="1" fill="none"/><path d="M279 319 L281.5 321.5 L284 319" stroke="#ff0000" stroke-width="1" fill="none"/><path d="M279 506 L281.5 508.5 L284 506" stroke="#ff0000" stroke-width="1" fill="none"/></svg>
<div style="left:2px;top:95px;width:50px;height:11px;background:#3c3cff"></div>
<div class="m" style="top:96px;left:2px;"><span style="color:#ffffff">RIP RAX</span></div>
<div style="left:1023px;top:95px;width:18px;height:483px;background:#f0f0f0;border-left:1px solid #828790"></div>
<div style="left:1025px;top:125px;width:15px;height:18px;background:#cdcdcd"></div>
<svg width="1667" height="906" style="position:absolute;left:0;top:0"><path d="M1029.1 105.785 L1032.5 102.215 L1035.9 105.785" stroke="#505050" stroke-width="2.1" fill="none"/></svg>
<svg width="1667" height="906" style="position:absolute;left:0;top:0"><path d="M1029.1 568.215 L1032.5 571.785 L1035.9 568.215" stroke="#505050" stroke-width="2.1" fill="none"/></svg>
<div style="left:0px;top:580px;width:1042px;height:50px;background:#fff8f0;border:1px solid #828790"></div>
<div class="m" style="top:582px;left:6px;"><span style="color:#000">eax=F6C61A40</span></div>
<div class="m" style="top:615px;left:6px;"><span style="color:#000">.text:00007FF9F6C61A40 nppexport.dll:$1A40 #E40 &lt;isUnicode&gt;</span></div>
<div style="left:1044px;top:95px;width:615px;height:21px;background:#e1e1e1;border:1px solid #adadad"></div>
<div class="m" style="left:1044px;top:101px;width:615px;text-align:center;font-family:'Liberation Mono', monospace;font-size:11px;letter-spacing:0.4px;line-height:11px">Hide FPU</div>
<div style="left:1043px;top:117px;width:617px;height:376px;background:#fff8f0;border:1px solid #828790;border-right:none;border-bottom:none"></div>
<div class="m" style="top:124px;left:1051px;"><span style="color:#000000">RAX   </span><span style="color:#ff0000">00007FF9F6C61A40</span><span style="color:#000000">     &lt;nppexport.isUnicode&gt;</span></div>
<div class="m" style="top:136px;left:1051px;"><span style="color:#000000">RBX   </span><span style="color:#ff0000">00000000000000C0</span><span style="color:#000000">     'À'</span></div>
<div class="m" style="top:148px;left:1051px;"><span style="color:#008000">RCX   </span><span style="color:#ff0000">B5178A4120C90000</span></div>
<div class="m" style="top:160px;left:1051px;"><span style="color:#008000">RDX   </span><span style="color:#ff0000">0000000000000003</span></div>
<div class="m" style="top:172px;left:1051px;"><span style="color:#000000">RBP   </span><span style="color:#ff0000">000000573BCFC270</span></div>
<div class="m" style="top:184px;left:1051px;"><span style="color:#000000">RSP   </span><span style="color:#ff0000">000000573BCFBA98</span></div>
<div class="m" style="top:196px;left:1051px;"><span style="color:#000000">RSI   </span><span style="color:#ff0000">00000177A9320890</span></div>
<div class="m" style="top:208px;left:1051px;"><span style="color:#000000">RDI   </span><span style="color:#000000">0000000000000000</span></div>
<div class="m" style="top:232px;left:1051px;"><span style="color:#008000">R8    </span><span style="color:#ff0000">0000000000000003</span></div>
<div class="m" style="top:244px;left:1051px;"><span style="color:#008000">R9    </span><span style="color:#ff0000">0000000000000003</span></div>
<div class="m" style="top:256px;left:1051px;"><span style="color:#000000">R10   </span><span style="color:#ff0000">0000000000000003</span></div>
<div class="m" style="top:268px;left:1051px;"><span style="color:#000000">R11   </span><span style="color:#ff0000">000000573BCFB770</span></div>
<div class="m" style="top:280px;left:1051px;"><span style="color:#000000">R12   </span><span style="color:#ff0000">00000177AB97F2CA</span><span style="color:#000000">     L"NppExport.dll"</span></div>
<div class="m" style="top:292px;left:1051px;"><span style="color:#000000">R13   </span><span style="color:#ff0000">00000177AB871BC0</span><span style="color:#000000">     L"^\n"</span></div>
<div class="m" style="top:304px;left:1051px;"><span style="color:#000000">R14   </span><span style="color:#ff0000">2AAAAAAAAAAAAAAB</span></div>
<div class="m" style="top:316px;left:1051px;"><span style="color:#000000">R15   </span><span style="color:#ff0000">00000177AE910830</span></div>
<div class="m" style="top:340px;left:1051px;"><span style="color:#000000">RIP   </span><span style="color:#ff0000">00007FF9F6C61A40</span><span style="color:#000000">     &lt;nppexport.isUnicode&gt;</span></div>
<div style="left:1051px;top:132px;width:21px;height:2px;background:#aa0000"></div>
<div class="m" style="top:364px;left:1051px;"><span style="color:#000000">RFLAGS   </span><span style="color:#ff0000">0000000000000300</span></div>
<div class="m" style="top:376px;left:1051px;"><span style="color:#000000">ZF </span><span style="color:#ff0000">0</span><span style="color:#000000">  PF </span><span style="color:#ff0000">0</span><span style="color:#000000">  AF 0</span></div>
<div class="m" style="top:388px;left:1051px;"><span style="color:#000000">OF 0  SF 0  DF 0</span></div>
<div class="m" style="top:400px;left:1051px;"><span style="color:#000000">CF 0  TF </span><span style="color:#ff0000">1</span><span style="color:#000000">  IF 1</span></div>
<div class="m" style="top:424px;left:1051px;"><span style="color:#000000">LastError  </span><span style="color:#ff0000">00000000 (ERROR_SUCCESS)</span></div>
<div class="m" style="top:436px;left:1051px;"><span style="color:#000000">LastStatus </span><span style="color:#ff0000">C0000139 (STATUS_ENTRYPOINT_NOT_FOUND)</span></div>
<div class="m" style="top:460px;left:1051px;"><span style="color:#000000">GS 002B  FS 0053</span></div>
<div class="m" style="top:472px;left:1051px;"><span style="color:#000000">ES 002B  DS 002B</span></div>
<div class="m" style="top:484px;left:1051px;"><span style="color:#000000">CS 0033  SS 002B</span></div>
<div style="left:1043px;top:492px;width:617px;height:1px;background:#ffffff"></div>
<div style="left:1043px;top:493px;width:617px;height:16px;background:#f0f0f0"></div>
<div style="left:1060px;top:493px;width:339px;height:15px;background:#cdcdcd"></div>
<svg width="1667" height="906" style="position:absolute;left:0;top:0"><path d="M1053.785 496.6 L1050.215 500 L1053.785 503.4" stroke="#505050" stroke-width="2.1" fill="none"/></svg>
<svg width="1667" height="906" style="position:absolute;left:0;top:0"><path d="M1632.215 496.6 L1635.785 500 L1632.215 503.4" stroke="#505050" stroke-width="2.1" fill="none"/></svg>
<div style="left:1644px;top:118px;width:16px;height:374px;background:#f0f0f0"></div>
<div style="left:1644px;top:134px;width:15px;height:99px;background:#cdcdcd"></div>
<svg width="1667" height="906" style="position:absolute;left:0;top:0"><path d="M1647.6 127.785 L1651 124.215 L1654.4 127.785" stroke="#505050" stroke-width="2.1" fill="none"/></svg>
<svg width="1667" height="906" style="position:absolute;left:0;top:0"><path d="M1647.6 482.215 L1651 485.785 L1654.4 482.215" stroke="#505050" stroke-width="2.1" fill="none"/></svg>
<div style="left:1043px;top:510px;width:510px;height:20px;background:#e5e5e5;border:1px solid #adadad"></div>
<div class="s" style="left:1046px;top:514px;font-size:11px">Default (x64 fastcall)</div>
<svg width="1667" height="906" style="position:absolute;left:0;top:0"><path d="M1538.5 517.75 L1547.5 517.75 L1543 522.25 Z" fill="#000"/></svg>
<div style="left:1556px;top:511px;width:35px;height:18px;background:#fff;border:1px solid #adadad"></div>
<div class="s" style="left:1559px;top:514px;font-size:10.5px">5</div>
<div style="left:1575px;top:513px;width:14px;height:14px;background:#f0f0f0;border:1px solid #d0d0d0"></div>
<svg width="1667" height="906" style="position:absolute;left:0;top:0"><path d="M1578.0 517.75 L1585.0 517.75 L1581.5 514.25 Z" fill="#000"/></svg>
<svg width="1667" height="906" style="position:absolute;left:0;top:0"><path d="M1578.0 521.25 L1585.0 521.25 L1581.5 524.75 Z" fill="#000"/></svg>
<div style="left:1594px;top:513px;width:13px;height:13px;background:#fff;border:1px solid #333"></div>
<div class="s" style="left:1611px;top:514px;font-size:10.4px">Unlocked</div>
<div style="left:1043px;top:530px;width:617px;height:100px;background:#fff8f0;border:1px solid #828790"></div>
<div style="left:1044px;top:531px;width:598px;height:11px;background:#c0c0c0"></div>
<div class="m" style="top:532px;left:1048px;"><span style="color:#000000">1: rcx B5178A4120C90000 B5178A4120C90000</span></div>
<div class="m" style="top:543px;left:1048px;"><span style="color:#000000">2: rdx 0000000000000003 0000000000000003</span></div>
<div class="m" style="top:554px;left:1048px;"><span style="color:#000000">3: r8 0000000000000003 0000000000000003</span></div>
<div class="m" style="top:565px;left:1048px;"><span style="color:#000000">4: r9 0000000000000003 0000000000000003</span></div>
<div class="m" style="top:576px;left:1048px;"><span style="color:#000000">5: [rsp+28] 00000177AE90F000 00000177AE90F000</span></div>
<div style="left:1642px;top:531px;width:17px;height:98px;background:#f0f0f0"></div>
<svg width="1667" height="906" style="position:absolute;left:0;top:0"><path d="M1647.6 541.785 L1651 538.215 L1654.4 541.785" stroke="#b0b0b0" stroke-width="2.1" fill="none"/></svg>
<svg width="1667" height="906" style="position:absolute;left:0;top:0"><path d="M1647.6 618.215 L1651 621.785 L1654.4 618.215" stroke="#b0b0b0" stroke-width="2.1" fill="none"/></svg>
<div style="left:0px;top:631px;width:81px;height:24px;background:#fff;border:1px solid #d9d9d9;border-bottom:none"></div>
<div style="left:81px;top:633px;width:79px;height:22px;background:#f0f0f0;border:1px solid #d9d9d9;border-bottom:none"></div>
<div style="left:159px;top:633px;width:81px;height:22px;background:#f0f0f0;border:1px solid #d9d9d9;border-bottom:none"></div>
<div style="left:239px;top:633px;width:81px;height:22px;background:#f0f0f0;border:1px solid #d9d9d9;border-bottom:none"></div>
<div style="left:319px;top:633px;width:81px;height:22px;background:#f0f0f0;border:1px solid #d9d9d9;border-bottom:none"></div>
<div style="left:399px;top:633px;width:85px;height:22px;background:#f0f0f0;border:1px solid #d9d9d9;border-bottom:none"></div>
<div style="left:483px;top:633px;width:74px;height:22px;background:#f0f0f0;border:1px solid #d9d9d9;border-bottom:none"></div>
<div style="left:556px;top:633px;width:71px;height:22px;background:#f0f0f0;border:1px solid #d9d9d9;border-bottom:none"></div>
<div class="s" style="left:31px;top:638px;font-size:10.6px">Dump 1</div>
<div class="s" style="left:111px;top:638px;font-size:10.6px">Dump 2</div>
<div class="s" style="left:191px;top:638px;font-size:10.6px">Dump 3</div>
<div class="s" style="left:271px;top:638px;font-size:10.6px">Dump 4</div>
<div class="s" style="left:351px;top:638px;font-size:10.6px">Dump 5</div>
<div class="s" style="left:431px;top:638px;font-size:10.6px">Watch 1</div>
<div class="s" style="left:515px;top:638px;font-size:10.6px">Locals</div>
<div class="s" style="left:588px;top:638px;font-size:10.6px">Struct</div>
<svg width="19" height="15" style="position:absolute;left:11px;top:635px"><rect x="6" y="1" width="11" height="10.5" rx="1" fill="#c9c9cc" stroke="#8a8a8a" stroke-width="0.8"/><path d="M9.5 2 V11 M13.5 2 V11" stroke="#777" stroke-width="0.9"/><rect x="1" y="3" width="5.5" height="8.5" rx="0.8" fill="#f2b400"/><rect x="1" y="5" width="3" height="4" fill="#3a78c0"/><circle cx="4" cy="12.3" r="2" fill="#333"/><circle cx="14" cy="12.3" r="2" fill="#333"/><circle cx="4" cy="12.3" r="0.8" fill="#bbb"/><circle cx="14" cy="12.3" r="0.8" fill="#bbb"/></svg>
<svg width="19" height="15" style="position:absolute;left:91px;top:635px"><rect x="6" y="1" width="11" height="10.5" rx="1" fill="#c9c9cc" stroke="#8a8a8a" stroke-width="0.8"/><path d="M9.5 2 V11 M13.5 2 V11" stroke="#777" stroke-width="0.9"/><rect x="1" y="3" width="5.5" height="8.5" rx="0.8" fill="#f2b400"/><rect x="1" y="5" width="3" height="4" fill="#3a78c0"/><circle cx="4" cy="12.3" r="2" fill="#333"/><circle cx="14" cy="12.3" r="2" fill="#333"/><circle cx="4" cy="12.3" r="0.8" fill="#bbb"/><circle cx="14" cy="12.3" r="0.8" fill="#bbb"/></svg>
<svg width="19" height="15" style="position:absolute;left:171px;top:635px"><rect x="6" y="1" width="11" height="10.5" rx="1" fill="#c9c9cc" stroke="#8a8a8a" stroke-width="0.8"/><path d="M9.5 2 V11 M13.5 2 V11" stroke="#777" stroke-width="0.9"/><rect x="1" y="3" width="5.5" height="8.5" rx="0.8" fill="#f2b400"/><rect x="1" y="5" width="3" height="4" fill="#3a78c0"/><circle cx="4" cy="12.3" r="2" fill="#333"/><circle cx="14" cy="12.3" r="2" fill="#333"/><circle cx="4" cy="12.3" r="0.8" fill="#bbb"/><circle cx="14" cy="12.3" r="0.8" fill="#bbb"/></svg>
<svg width="19" height="15" style="position:absolute;left:251px;top:635px"><rect x="6" y="1" width="11" height="10.5" rx="1" fill="#c9c9cc" stroke="#8a8a8a" stroke-width="0.8"/><path d="M9.5 2 V11 M13.5 2 V11" stroke="#777" stroke-width="0.9"/><rect x="1" y="3" width="5.5" height="8.5" rx="0.8" fill="#f2b400"/><rect x="1" y="5" width="3" height="4" fill="#3a78c0"/><circle cx="4" cy="12.3" r="2" fill="#333"/><circle cx="14" cy="12.3" r="2" fill="#333"/><circle cx="4" cy="12.3" r="0.8" fill="#bbb"/><circle cx="14" cy="12.3" r="0.8" fill="#bbb"/></svg>
<svg width="19" height="15" style="position:absolute;left:331px;top:635px"><rect x="6" y="1" width="11" height="10.5" rx="1" fill="#c9c9cc" stroke="#8a8a8a" stroke-width="0.8"/><path d="M9.5 2 V11 M13.5 2 V11" stroke="#777" stroke-width="0.9"/><rect x="1" y="3" width="5.5" height="8.5" rx="0.8" fill="#f2b400"/><rect x="1" y="5" width="3" height="4" fill="#3a78c0"/><circle cx="4" cy="12.3" r="2" fill="#333"/><circle cx="14" cy="12.3" r="2" fill="#333"/><circle cx="4" cy="12.3" r="0.8" fill="#bbb"/><circle cx="14" cy="12.3" r="0.8" fill="#bbb"/></svg>
<svg width="16" height="16" style="position:absolute;left:411px;top:635px"><circle cx="8" cy="8.5" r="6.5" fill="#d49a5a"/><path d="M2 3 L5 6 L2 8Z M14 3 L11 6 L14 8Z" fill="#b0703a"/><ellipse cx="8" cy="11" rx="3.5" ry="2.5" fill="#f3dcc0"/><circle cx="5.8" cy="7.5" r="1" fill="#222"/><circle cx="10.2" cy="7.5" r="1" fill="#222"/><circle cx="8" cy="10" r="0.9" fill="#222"/></svg>
<div class="s" style="left:495px;top:638px;font-size:11px;color:#444">[<i style='font-family:Liberation Serif;color:#7a2a2a'>x</i>=]</div>
<svg width="16" height="16" style="position:absolute;left:568px;top:636px"><circle cx="3" cy="3" r="2" fill="#fff" stroke="#3060c0" stroke-width="1.2"/><path d="M3 5 V12 H9 M3 8 H9" stroke="#888" fill="none"/><circle cx="11" cy="3" r="2" fill="#fff" stroke="#888"/><circle cx="11" cy="8" r="2" fill="#fff" stroke="#888"/><circle cx="11" cy="12.5" r="2" fill="#fff" stroke="#888"/></svg>
<div style="left:0px;top:655px;width:1005px;height:206px;background:#fff8f0;border:1px solid #828790"></div>
<div style="left:1px;top:656px;width:986px;height:14px;background:#c0c0c0"></div>
<div style="left:1px;top:669px;width:986px;height:2px;background:#808080"></div>
<div style="left:120px;top:656px;width:2px;height:14px;background:#808080"></div>
<div style="left:457px;top:656px;width:2px;height:14px;background:#808080"></div>
<div style="left:577px;top:656px;width:2px;height:14px;background:#808080"></div>
<div class="m" style="top:659px;left:5px;"><span style="color:#000000">Address</span></div>
<div class="m" style="top:659px;left:125px;"><span style="color:#000000">Hex</span></div>
<div class="m" style="top:659px;left:462px;"><span style="color:#000000">ASCII</span></div>
<div style="left:120px;top:671px;width:1px;height:189px;background:#808080"></div>
<div style="left:205px;top:671px;width:1px;height:189px;background:#808080"></div>
<div style="left:289px;top:671px;width:1px;height:189px;background:#808080"></div>
<div style="left:373px;top:671px;width:1px;height:189px;background:#808080"></div>
<div style="left:457px;top:671px;width:1px;height:189px;background:#808080"></div>
<div style="left:577px;top:671px;width:1px;height:189px;background:#808080"></div>
<div style="left:121px;top:671px;width:21px;height:11px;background:#c0c0c0"></div>
<div style="left:462px;top:671px;width:7px;height:11px;background:#c0c0c0"></div>
<div class="m" style="top:672px;left:5px;"><span style="color:#000000">00007FF9FDBB1000</span></div>
<div class="m" style="top:672px;left:125px;"><span style="color:#000000">CC</span><span style="color:#000000"> </span><span style="color:#000000">CC</span><span style="color:#000000"> </span><span style="color:#000000">CC</span><span style="color:#000000"> </span><span style="color:#000000">CC</span><span style="color:#000000"> </span><span style="color:#000000">CC</span><span style="color:#000000"> </span><span style="color:#000000">CC</span><span style="color:#000000"> </span><span style="color:#000000">CC</span><span style="color:#000000"> </span><span style="color:#000000">CC</span><span style="color:#000000"> </span><span style="color:#000000">CC</span><span style="color:#000000"> </span><span style="color:#000000">CC</span><span style="color:#000000"> </span><span style="color:#000000">CC</span><span style="color:#000000"> </span><span style="color:#000000">CC</span><span style="color:#000000"> </span><span style="color:#000000">CC</span><span style="color:#000000"> </span><span style="color:#000000">CC</span><span style="color:#000000"> </span><span style="color:#000000">CC</span><span style="color:#000000"> </span><span style="color:#000000">CC</span><span style="color:#000000"> </span></div>
<div class="m" style="top:672px;left:462px;"><span style="color:#000000">Ì</span><span style="color:#000000">Ì</span><span style="color:#000000">Ì</span><span style="color:#000000">Ì</span><span style="color:#000000">Ì</span><span style="color:#000000">Ì</span><span style="color:#000000">Ì</span><span style="color:#000000">Ì</span><span style="color:#000000">Ì</span><span style="color:#000000">Ì</span><span style="color:#000000">Ì</span><span style="color:#000000">Ì</span><span style="color:#000000">Ì</span><span style="color:#000000">Ì</span><span style="color:#000000">Ì</span><span style="color:#000000">Ì</span></div>
<div class="m" style="top:683px;left:5px;"><span style="color:#ff0000">00007FF9FDBB1010</span></div>
<div class="m" style="top:683px;left:125px;"><span style="color:#800080">48</span><span style="color:#000000"> </span><span style="color:#000000">89</span><span style="color:#000000"> </span><span style="color:#800080">5C</span><span style="color:#000000"> </span><span style="color:#800080">24</span><span style="color:#000000"> </span><span style="color:#000000">10</span><span style="color:#000000"> </span><span style="color:#800080">48</span><span style="color:#000000"> </span><span style="color:#000000">89</span><span style="color:#000000"> </span><span style="color:#800080">74</span><span style="color:#000000"> </span><span style="color:#800080">24</span><span style="color:#000000"> </span><span style="color:#000000">18</span><span style="color:#000000"> </span><span style="color:#800080">57</span><span style="color:#000000"> </span><span style="color:#800080">41</span><span style="color:#000000"> </span><span style="color:#800080">56</span><span style="color:#000000"> </span><span style="color:#800080">41</span><span style="color:#000000"> </span><span style="color:#800080">57</span><span style="color:#000000"> </span><span style="color:#800080">48</span><span style="color:#000000"> </span></div>
<div class="m" style="top:683px;left:462px;"><span style="color:#800080">H</span><span style="color:#000000">.</span><span style="color:#800080">\</span><span style="color:#800080">$</span><span style="color:#000000">.</span><span style="color:#800080">H</span><span style="color:#000000">.</span><span style="color:#800080">t</span><span style="color:#800080">$</span><span style="color:#000000">.</span><span style="color:#800080">W</span><span style="color:#800080">A</span><span style="color:#800080">V</span><span style="color:#800080">A</span><span style="color:#800080">W</span><span style="color:#800080">H</span></div>
<div class="m" style="top:694px;left:5px;"><span style="color:#000000">00007FF9FDBB1020</span></div>
<div class="m" style="top:694px;left:125px;"><span style="color:#000000">81</span><span style="color:#000000"> </span><span style="color:#000000">EC</span><span style="color:#000000"> </span><span style="color:#000000">80</span><span style="color:#000000"> </span><span style="color:#008000">00</span><span style="color:#000000"> </span><span style="color:#008000">00</span><span style="color:#000000"> </span><span style="color:#008000">00</span><span style="color:#000000"> </span><span style="color:#800080">48</span><span style="color:#000000"> </span><span style="color:#000000">8B</span><span style="color:#000000"> </span><span style="color:#000000">05</span><span style="color:#000000"> </span><span style="color:#000000">E3</span><span style="color:#000000"> </span><span style="color:#800080">34</span><span style="color:#000000"> </span><span style="color:#000000">18</span><span style="color:#000000"> </span><span style="color:#008000">00</span><span style="color:#000000"> </span><span style="color:#800080">48</span><span style="color:#000000"> </span><span style="color:#800080">33</span><span style="color:#000000"> </span><span style="color:#000000">C4</span><span style="color:#000000"> </span></div>
<div class="m" style="top:694px;left:462px;"><span style="color:#000000">.</span><span style="color:#000000">ì</span><span style="color:#000000">.</span><span style="color:#008000">.</span><span style="color:#008000">.</span><span style="color:#008000">.</span><span style="color:#800080">H</span><span style="color:#000000">.</span><span style="color:#000000">.</span><span style="color:#000000">ã</span><span style="color:#800080">4</span><span style="color:#000000">.</span><span style="color:#008000">.</span><span style="color:#800080">H</span><span style="color:#800080">3</span><span style="color:#000000">Ä</span></div>
<div class="m" style="top:705px;left:5px;"><span style="color:#000000">00007FF9FDBB1030</span></div>
<div class="m" style="top:705px;left:125px;"><span style="color:#800080">48</span><span style="color:#000000"> </span><span style="color:#000000">89</span><span style="color:#000000"> </span><span style="color:#800080">44</span><span style="color:#000000"> </span><span style="color:#800080">24</span><span style="color:#000000"> </span><span style="color:#800080">70</span><span style="color:#000000"> </span><span style="color:#800080">4D</span><span style="color:#000000"> </span><span style="color:#000000">8B</span><span style="color:#000000"> </span><span style="color:#000000">F9</span><span style="color:#000000"> </span><span style="color:#800080">41</span><span style="color:#000000"> </span><span style="color:#000000">8B</span><span style="color:#000000"> </span><span style="color:#000000">F8</span><span style="color:#000000"> </span><span style="color:#800080">48</span><span style="color:#000000"> </span><span style="color:#000000">8B</span><span style="color:#000000"> </span><span style="color:#000000">C1</span><span style="color:#000000"> </span><span style="color:#000000">85</span><span style="color:#000000"> </span><span style="color:#000000">D2</span><span style="color:#000000"> </span></div>
<div class="m" style="top:705px;left:462px;"><span style="color:#800080">H</span><span style="color:#000000">.</span><span style="color:#800080">D</span><span style="color:#800080">$</span><span style="color:#800080">p</span><span style="color:#800080">M</span><span style="color:#000000">.</span><span style="color:#000000">ù</span><span style="color:#800080">A</span><span style="color:#000000">.</span><span style="color:#000000">ø</span><span style="color:#800080">H</span><span style="color:#000000">.</span><span style="color:#000000">Á</span><span style="color:#000000">.</span><span style="color:#000000">Ò</span></div>
<div class="m" style="top:716px;left:5px;"><span style="color:#000000">00007FF9FDBB1040</span></div>
<div class="m" style="top:716px;left:125px;"><span style="color:#000000">0F</span><span style="color:#000000"> </span><span style="color:#000000">84</span><span style="color:#000000"> </span><span style="color:#000000">A1</span><span style="color:#000000"> </span><span style="color:#800080">65</span><span style="color:#000000"> </span><span style="color:#800080">0A</span><span style="color:#000000"> </span><span style="color:#008000">00</span><span style="color:#000000"> </span><span style="color:#000000">83</span><span style="color:#000000"> </span><span style="color:#000000">FA</span><span style="color:#000000"> </span><span style="color:#800080">0A</span><span style="color:#000000"> </span><span style="color:#000000">0F</span><span style="color:#000000"> </span><span style="color:#000000">85</span><span style="color:#000000"> </span><span style="color:#800080">55</span><span style="color:#000000"> </span><span style="color:#800080">65</span><span style="color:#000000"> </span><span style="color:#800080">0A</span><span style="color:#000000"> </span><span style="color:#008000">00</span><span style="color:#000000"> </span><span style="color:#800080">45</span><span style="color:#000000"> </span></div>
<div class="m" style="top:716px;left:462px;"><span style="color:#000000">.</span><span style="color:#000000">.</span><span style="color:#000000">¡</span><span style="color:#800080">e</span><span style="color:#800080">.</span><span style="color:#008000">.</span><span style="color:#000000">.</span><span style="color:#000000">ú</span><span style="color:#800080">.</span><span style="color:#000000">.</span><span style="color:#000000">.</span><span style="color:#800080">U</span><span style="color:#800080">e</span><span style="color:#800080">.</span><span style="color:#008000">.</span><span style="color:#800080">E</span></div>
<div class="m" style="top:727px;left:5px;"><span style="color:#000000">00007FF9FDBB1050</span></div>
<div class="m" style="top:727px;left:125px;"><span style="color:#800080">33</span><span style="color:#000000"> </span><span style="color:#000000">C9</span><span style="color:#000000"> </span><span style="color:#800080">45</span><span style="color:#000000"> </span><span style="color:#800080">33</span><span style="color:#000000"> </span><span style="color:#000000">D2</span><span style="color:#000000"> </span><span style="color:#800080">4C</span><span style="color:#000000"> </span><span style="color:#000000">8D</span><span style="color:#000000"> </span><span style="color:#800080">74</span><span style="color:#000000"> </span><span style="color:#800080">24</span><span style="color:#000000"> </span><span style="color:#800080">61</span><span style="color:#000000"> </span><span style="color:#800080">48</span><span style="color:#000000"> </span><span style="color:#000000">8B</span><span style="color:#000000"> </span><span style="color:#008000">00</span><span style="color:#000000"> </span><span style="color:#800080">4C</span><span style="color:#000000"> </span><span style="color:#000000">8D</span><span style="color:#000000"> </span><span style="color:#000000">1D</span><span style="color:#000000"> </span></div>
<div class="m" style="top:727px;left:462px;"><span style="color:#800080">3</span><span style="color:#000000">É</span><span style="color:#800080">E</span><span style="color:#800080">3</span><span style="color:#000000">Ò</span><span style="color:#800080">L</span><span style="color:#000000">.</span><span style="color:#800080">t</span><span style="color:#800080">$</span><span style="color:#800080">a</span><span style="color:#800080">H</span><span style="color:#000000">.</span><span style="color:#008000">.</span><span style="color:#800080">L</span><span style="color:#000000">.</span><span style="color:#000000">.</span></div>
<div class="m" style="top:738px;left:5px;"><span style="color:#000000">00007FF9FDBB1060</span></div>
<div class="m" style="top:738px;left:125px;"><span style="color:#000000">C4</span><span style="color:#000000"> </span><span style="color:#800080">5A</span><span style="color:#000000"> </span><span style="color:#000000">12</span><span style="color:#000000"> </span><span style="color:#008000">00</span><span style="color:#000000"> </span><span style="color:#800080">45</span><span style="color:#000000"> </span><span style="color:#000000">85</span><span style="color:#000000"> </span><span style="color:#000000">C9</span><span style="color:#000000"> </span><span style="color:#000000">0F</span><span style="color:#000000"> </span><span style="color:#000000">85</span><span style="color:#000000"> </span><span style="color:#000000">84</span><span style="color:#000000"> </span><span style="color:#800080">65</span><span style="color:#000000"> </span><span style="color:#800080">0A</span><span style="color:#000000"> </span><span style="color:#008000">00</span><span style="color:#000000"> </span><span style="color:#800080">44</span><span style="color:#000000"> </span><span style="color:#000000">8B</span><span style="color:#000000"> </span><span style="color:#000000">C2</span><span style="color:#000000"> </span></div>
<div class="m" style="top:738px;left:462px;"><span style="color:#000000">Ä</span><span style="color:#800080">Z</span><span style="color:#000000">.</span><span style="color:#008000">.</span><span style="color:#800080">E</span><span style="color:#000000">.</span><span style="color:#000000">É</span><span style="color:#000000">.</span><span style="color:#000000">.</span><span style="color:#000000">.</span><span style="color:#800080">e</span><span style="color:#800080">.</span><span style="color:#008000">.</span><span style="color:#800080">D</span><span style="color:#000000">.</span><span style="color:#000000">Â</span></div>
<div class="m" style="top:749px;left:5px;"><span style="color:#000000">00007FF9FDBB1070</span></div>
<div class="m" style="top:749px;left:125px;"><span style="color:#800080">33</span><span style="color:#000000"> </span><span style="color:#000000">D2</span><span style="color:#000000"> </span><span style="color:#800080">49</span><span style="color:#000000"> </span><span style="color:#000000">F7</span><span style="color:#000000"> </span><span style="color:#000000">F0</span><span style="color:#000000"> </span><span style="color:#800080">49</span><span style="color:#000000"> </span><span style="color:#800000">FF</span><span style="color:#000000"> </span><span style="color:#000000">CE</span><span style="color:#000000"> </span><span style="color:#000000">8B</span><span style="color:#000000"> </span><span style="color:#000000">CA</span><span style="color:#000000"> </span><span style="color:#800080">42</span><span style="color:#000000"> </span><span style="color:#000000">8A</span><span style="color:#000000"> </span><span style="color:#800080">0C</span><span style="color:#000000"> </span><span style="color:#000000">19</span><span style="color:#000000"> </span><span style="color:#800080">41</span><span style="color:#000000"> </span><span style="color:#000000">88</span><span style="color:#000000"> </span></div>
<div class="m" style="top:749px;left:462px;"><span style="color:#800080">3</span><span style="color:#000000">Ò</span><span style="color:#800080">I</span><span style="color:#000000">÷</span><span style="color:#000000">ð</span><span style="color:#800080">I</span><span style="color:#800000">ÿ</span><span style="color:#000000">Î</span><span style="color:#000000">.</span><span style="color:#000000">Ê</span><span style="color:#800080">B</span><span style="color:#000000">.</span><span style="color:#800080">.</span><span style="color:#000000">.</span><span style="color:#800080">A</span><span style="color:#000000">.</span></div>
<div class="m" style="top:760px;left:5px;"><span style="color:#000000">00007FF9FDBB1080</span></div>
<div class="m" style="top:760px;left:125px;"><span style="color:#000000">0E</span><span style="color:#000000"> </span><span style="color:#800080">48</span><span style="color:#000000"> </span><span style="color:#000000">85</span><span style="color:#000000"> </span><span style="color:#000000">C0</span><span style="color:#000000"> </span><span style="color:#800080">75</span><span style="color:#000000"> </span><span style="color:#000000">EA</span><span style="color:#000000"> </span><span style="color:#800080">48</span><span style="color:#000000"> </span><span style="color:#000000">8D</span><span style="color:#000000"> </span><span style="color:#800080">74</span><span style="color:#000000"> </span><span style="color:#800080">24</span><span style="color:#000000"> </span><span style="color:#800080">61</span><span style="color:#000000"> </span><span style="color:#800080">41</span><span style="color:#000000"> </span><span style="color:#800080">2B</span><span style="color:#000000"> </span><span style="color:#000000">F6</span><span style="color:#000000"> </span><span style="color:#000000">85</span><span style="color:#000000"> </span><span style="color:#800000">FF</span><span style="color:#000000"> </span></div>
<div class="m" style="top:760px;left:462px;"><span style="color:#000000">.</span><span style="color:#800080">H</span><span style="color:#000000">.</span><span style="color:#000000">À</span><span style="color:#800080">u</span><span style="color:#000000">ê</span><span style="color:#800080">H</span><span style="color:#000000">.</span><span style="color:#800080">t</span><span style="color:#800080">$</span><span style="color:#800080">a</span><span style="color:#800080">A</span><span style="color:#800080">+</span><span style="color:#000000">ö</span><span style="color:#000000">.</span><span style="color:#800000">ÿ</span></div>
<div class="m" style="top:771px;left:5px;"><span style="color:#000000">00007FF9FDBB1090</span></div>
<div class="m" style="top:771px;left:125px;"><span style="color:#000000">0F</span><span style="color:#000000"> </span><span style="color:#000000">88</span><span style="color:#000000"> </span><span style="color:#800080">7E</span><span style="color:#000000"> </span><span style="color:#800080">65</span><span style="color:#000000"> </span><span style="color:#800080">0A</span><span style="color:#000000"> </span><span style="color:#008000">00</span><span style="color:#000000"> </span><span style="color:#800080">3B</span><span style="color:#000000"> </span><span style="color:#000000">F7</span><span style="color:#000000"> </span><span style="color:#000000">0F</span><span style="color:#000000"> </span><span style="color:#000000">8F</span><span style="color:#000000"> </span><span style="color:#000000">9B</span><span style="color:#000000"> </span><span style="color:#800080">65</span><span style="color:#000000"> </span><span style="color:#800080">0A</span><span style="color:#000000"> </span><span style="color:#008000">00</span><span style="color:#000000"> </span><span style="color:#800080">44</span><span style="color:#000000"> </span><span style="color:#000000">8B</span><span style="color:#000000"> </span></div>
<div class="m" style="top:771px;left:462px;"><span style="color:#000000">.</span><span style="color:#000000">.</span><span style="color:#800080">~</span><span style="color:#800080">e</span><span style="color:#800080">.</span><span style="color:#008000">.</span><span style="color:#800080">;</span><span style="color:#000000">÷</span><span style="color:#000000">.</span><span style="color:#000000">.</span><span style="color:#000000">.</span><span style="color:#800080">e</span><span style="color:#800080">.</span><span style="color:#008000">.</span><span style="color:#800080">D</span><span style="color:#000000">.</span></div>
<div class="m" style="top:782px;left:5px;"><span style="color:#000000">00007FF9FDBB10A0</span></div>
<div class="m" style="top:782px;left:125px;"><span style="color:#000000">C6</span><span style="color:#000000"> </span><span style="color:#800080">49</span><span style="color:#000000"> </span><span style="color:#000000">8B</span><span style="color:#000000"> </span><span style="color:#000000">D6</span><span style="color:#000000"> </span><span style="color:#800080">49</span><span style="color:#000000"> </span><span style="color:#000000">8B</span><span style="color:#000000"> </span><span style="color:#000000">CF</span><span style="color:#000000"> </span><span style="color:#000000">E8</span><span style="color:#000000"> </span><span style="color:#000000">D4</span><span style="color:#000000"> </span><span style="color:#800080">2D</span><span style="color:#000000"> </span><span style="color:#800080">0A</span><span style="color:#000000"> </span><span style="color:#008000">00</span><span style="color:#000000"> </span><span style="color:#800080">3B</span><span style="color:#000000"> </span><span style="color:#000000">F7</span><span style="color:#000000"> </span><span style="color:#800080">7D</span><span style="color:#000000"> </span><span style="color:#000000">05</span><span style="color:#000000"> </span></div>
<div class="m" style="top:782px;left:462px;"><span style="color:#000000">Æ</span><span style="color:#800080">I</span><span style="color:#000000">.</span><span style="color:#000000">Ö</span><span style="color:#800080">I</span><span style="color:#000000">.</span><span style="color:#000000">Ï</span><span style="color:#000000">è</span><span style="color:#000000">Ô</span><span style="color:#800080">-</span><span style="color:#800080">.</span><span style="color:#008000">.</span><span style="color:#800080">;</span><span style="color:#000000">÷</span><span style="color:#800080">}</span><span style="color:#000000">.</span></div>
<div class="m" style="top:793px;left:5px;"><span style="color:#000000">00007FF9FDBB10B0</span></div>
<div class="m" style="top:793px;left:125px;"><span style="color:#800080">42</span><span style="color:#000000"> </span><span style="color:#000000">C6</span><span style="color:#000000"> </span><span style="color:#000000">04</span><span style="color:#000000"> </span><span style="color:#800080">3E</span><span style="color:#000000"> </span><span style="color:#008000">00</span><span style="color:#000000"> </span><span style="color:#000000">EB</span><span style="color:#000000"> </span><span style="color:#000000">02</span><span style="color:#000000"> </span><span style="color:#000000">EB</span><span style="color:#000000"> </span><span style="color:#000000">02</span><span style="color:#000000"> </span><span style="color:#800080">33</span><span style="color:#000000"> </span><span style="color:#000000">C0</span><span style="color:#000000"> </span><span style="color:#800080">48</span><span style="color:#000000"> </span><span style="color:#000000">8B</span><span style="color:#000000"> </span><span style="color:#800080">4C</span><span style="color:#000000"> </span><span style="color:#800080">24</span><span style="color:#000000"> </span><span style="color:#800080">70</span><span style="color:#000000"> </span></div>
<div class="m" style="top:793px;left:462px;"><span style="color:#800080">B</span><span style="color:#000000">Æ</span><span style="color:#000000">.</span><span style="color:#800080">&gt;</span><span style="color:#008000">.</span><span style="color:#000000">ë</span><span style="color:#000000">.</span><span style="color:#000000">ë</span><span style="color:#000000">.</span><span style="color:#800080">3</span><span style="color:#000000">À</span><span style="color:#800080">H</span><span style="color:#000000">.</span><span style="color:#800080">L</span><span style="color:#800080">$</span><span style="color:#800080">p</span></div>
<div class="m" style="top:804px;left:5px;"><span style="color:#000000">00007FF9FDBB10C0</span></div>
<div class="m" style="top:804px;left:125px;"><span style="color:#800080">48</span><span style="color:#000000"> </span><span style="color:#800080">33</span><span style="color:#000000"> </span><span style="color:#000000">CC</span><span style="color:#000000"> </span><span style="color:#000000">E8</span><span style="color:#000000"> </span><span style="color:#800080">78</span><span style="color:#000000"> </span><span style="color:#000000">B2</span><span style="color:#000000"> </span><span style="color:#000000">08</span><span style="color:#000000"> </span><span style="color:#008000">00</span><span style="color:#000000"> </span><span style="color:#800080">4C</span><span style="color:#000000"> </span><span style="color:#000000">8D</span><span style="color:#000000"> </span><span style="color:#000000">9C</span><span style="color:#000000"> </span><span style="color:#800080">24</span><span style="color:#000000"> </span><span style="color:#000000">80</span><span style="color:#000000"> </span><span style="color:#008000">00</span><span style="color:#000000"> </span><span style="color:#008000">00</span><span style="color:#000000"> </span><span style="color:#008000">00</span><span style="color:#000000"> </span></div>
<div class="m" style="top:804px;left:462px;"><span style="color:#800080">H</span><span style="color:#800080">3</span><span style="color:#000000">Ì</span><span style="color:#000000">è</span><span style="color:#800080">x</span><span style="color:#000000">²</span><span style="color:#000000">.</span><span style="color:#008000">.</span><span style="color:#800080">L</span><span style="color:#000000">.</span><span style="color:#000000">.</span><span style="color:#800080">$</span><span style="color:#000000">.</span><span style="color:#008000">.</span><span style="color:#008000">.</span><span style="color:#008000">.</span></div>
<div class="m" style="top:815px;left:5px;"><span style="color:#000000">00007FF9FDBB10D0</span></div>
<div class="m" style="top:815px;left:125px;"><span style="color:#800080">49</span><span style="color:#000000"> </span><span style="color:#000000">8B</span><span style="color:#000000"> </span><span style="color:#800080">5B</span><span style="color:#000000"> </span><span style="color:#800080">28</span><span style="color:#000000"> </span><span style="color:#800080">49</span><span style="color:#000000"> </span><span style="color:#000000">8B</span><span style="color:#000000"> </span><span style="color:#800080">73</span><span style="color:#000000"> </span><span style="color:#800080">30</span><span style="color:#000000"> </span><span style="color:#800080">49</span><span style="color:#000000"> </span><span style="color:#000000">8B</span><span style="color:#000000"> </span><span style="color:#000000">E3</span><span style="color:#000000"> </span><span style="color:#800080">41</span><span style="color:#000000"> </span><span style="color:#800080">5F</span><span style="color:#000000"> </span><span style="color:#800080">41</span><span style="color:#000000"> </span><span style="color:#800080">5E</span><span style="color:#000000"> </span><span style="color:#800080">5F</span><span style="color:#000000"> </span></div>
<div class="m" style="top:815px;left:462px;"><span style="color:#800080">I</span><span style="color:#000000">.</span><span style="color:#800080">[</span><span style="color:#800080">(</span><span style="color:#800080">I</span><span style="color:#000000">.</span><span style="color:#800080">s</span><span style="color:#800080">0</span><span style="color:#800080">I</span><span style="color:#000000">.</span><span style="color:#000000">ã</span><span style="color:#800080">A</span><span style="color:#800080">_</span><span style="color:#800080">A</span><span style="color:#800080">^</span><span style="color:#800080">_</span></div>
<div class="m" style="top:826px;left:5px;"><span style="color:#000000">00007FF9FDBB10E0</span></div>
<div class="m" style="top:826px;left:125px;"><span style="color:#000000">C3</span><span style="color:#000000"> </span><span style="color:#000000">CC</span><span style="color:#000000"> </span><span style="color:#000000">CC</span><span style="color:#000000"> </span><span style="color:#000000">CC</span><span style="color:#000000"> </span><span style="color:#000000">CC</span><span style="color:#000000"> </span><span style="color:#000000">CC</span><span style="color:#000000"> </span><span style="color:#000000">CC</span><span style="color:#000000"> </span><span style="color:#000000">CC</span><span style="color:#000000"> </span><span style="color:#800080">48</span><span style="color:#000000"> </span><span style="color:#000000">89</span><span style="color:#000000"> </span><span style="color:#800080">5C</span><span style="color:#000000"> </span><span style="color:#800080">24</span><span style="color:#000000"> </span><span style="color:#800080">20</span><span style="color:#000000"> </span><span style="color:#800080">55</span><span style="color:#000000"> </span><span style="color:#800080">56</span><span style="color:#000000"> </span><span style="color:#800080">57</span><span style="color:#000000"> </span></div>
<div class="m" style="top:826px;left:462px;"><span style="color:#000000">Ã</span><span style="color:#000000">Ì</span><span style="color:#000000">Ì</span><span style="color:#000000">Ì</span><span style="color:#000000">Ì</span><span style="color:#000000">Ì</span><span style="color:#000000">Ì</span><span style="color:#000000">Ì</span><span style="color:#800080">H</span><span style="color:#000000">.</span><span style="color:#800080">\</span><span style="color:#800080">$</span><span style="color:#800080"> </span><span style="color:#800080">U</span><span style="color:#800080">V</span><span style="color:#800080">W</span></div>
<div class="m" style="top:837px;left:5px;"><span style="color:#000000">00007FF9FDBB10F0</span></div>
<div class="m" style="top:837px;left:125px;"><span style="color:#800080">41</span><span style="color:#000000"> </span><span style="color:#800080">54</span><span style="color:#000000"> </span><span style="color:#800080">41</span><span style="color:#000000"> </span><span style="color:#800080">55</span><span style="color:#000000"> </span><span style="color:#800080">41</span><span style="color:#000000"> </span><span style="color:#800080">56</span><span style="color:#000000"> </span><span style="color:#800080">41</span><span style="color:#000000"> </span><span style="color:#800080">57</span><span style="color:#000000"> </span><span style="color:#800080">48</span><span style="color:#000000"> </span><span style="color:#000000">8D</span><span style="color:#000000"> </span><span style="color:#000000">AC</span><span style="color:#000000"> </span><span style="color:#800080">24</span><span style="color:#000000"> </span><span style="color:#000000">90</span><span style="color:#000000"> </span><span style="color:#000000">FE</span><span style="color:#000000"> </span><span style="color:#800000">FF</span><span style="color:#000000"> </span><span style="color:#800000">FF</span><span style="color:#000000"> </span></div>
<div class="m" style="top:837px;left:462px;"><span style="color:#800080">A</span><span style="color:#800080">T</span><span style="color:#800080">A</span><span style="color:#800080">U</span><span style="color:#800080">A</span><span style="color:#800080">V</span><span style="color:#800080">A</span><span style="color:#800080">W</span><span style="color:#800080">H</span><span style="color:#000000">.</span><span style="color:#000000">¬</span><span style="color:#800080">$</span><span style="color:#000000">.</span><span style="color:#000000">þ</span><span style="color:#800000">ÿ</span><span style="color:#800000">ÿ</span></div>
<div class="m" style="top:848px;left:5px;"><span style="color:#000000">00007FF9FDBB1100</span></div>
<div class="m" style="top:848px;left:125px;"><span style="color:#800080">48</span><span style="color:#000000"> </span><span style="color:#000000">81</span><span style="color:#000000"> </span><span style="color:#000000">EC</span><span style="color:#000000"> </span><span style="color:#800080">70</span><span style="color:#000000"> </span><span style="color:#000000">02</span><span style="color:#000000"> </span><span style="color:#008000">00</span><span style="color:#000000"> </span><span style="color:#008000">00</span><span style="color:#000000"> </span><span style="color:#800080">48</span><span style="color:#000000"> </span><span style="color:#000000">8B</span><span style="color:#000000"> </span><span style="color:#000000">05</span><span style="color:#000000"> </span><span style="color:#000000">02</span><span style="color:#000000"> </span><span style="color:#800080">34</span><span style="color:#000000"> </span><span style="color:#000000">18</span><span style="color:#000000"> </span><span style="color:#008000">00</span><span style="color:#000000"> </span><span style="color:#800080">48</span><span style="color:#000000"> </span><span style="color:#800080">33</span><span style="color:#000000"> </span></div>
<div class="m" style="top:848px;left:462px;"><span style="color:#800080">H</span><span style="color:#000000">.</span><span style="color:#000000">ì</span><span style="color:#800080">p</span><span style="color:#000000">.</span><span style="color:#008000">.</span><span style="color:#008000">.</span><span style="color:#800080">H</span><span style="color:#000000">.</span><span style="color:#000000">.</span><span style="color:#000000">.</span><span style="color:#800080">4</span><span style="color:#000000">.</span><span style="color:#008000">.</span><span style="color:#800080">H</span><span style="color:#800080">3</span></div>
<div style="left:987px;top:656px;width:17px;height:204px;background:#f0f0f0"></div>
<div style="left:986px;top:669px;width:1px;height:191px;background:#808080"></div>
<div style="left:985px;top:656px;width:2px;height:15px;background:#808080"></div>
<div style="left:988px;top:673px;width:15px;height:18px;background:#cdcdcd"></div>
<svg width="1667" height="906" style="position:absolute;left:0;top:0"><path d="M992.1 666.785 L995.5 663.215 L998.9 666.785" stroke="#505050" stroke-width="2.1" fill="none"/></svg>
<svg width="1667" height="906" style="position:absolute;left:0;top:0"><path d="M992.1 849.715 L995.5 853.285 L998.9 849.715" stroke="#505050" stroke-width="2.1" fill="none"/></svg>
<div style="left:1006px;top:631px;width:654px;height:230px;background:#fff8f0;border:1px solid #828790"></div>
<div style="left:1129px;top:632px;width:514px;height:11px;background:#c0c0c0"></div>
<div style="left:1007px;top:632px;width:119px;height:11px;background:#000"></div>
<div style="left:1126px;top:632px;width:1px;height:211px;background:#808080"></div>
<div style="left:1248px;top:632px;width:1px;height:211px;background:#808080"></div>
<div class="m" style="top:633px;left:1011px;"><span style="color:#ffffff">000000573BCFBA98</span></div>
<div class="m" style="top:633px;left:1134px;"><span style="color:#000000">00007FF6331E8456</span></div>
<div class="m" style="top:633px;left:1253px;width:389px;overflow:hidden;"><span style="color:#ff0000">return to notepad++.SetLibraryProperty+1684B6 from ???</span></div>
<div class="m" style="top:644px;left:1011px;"><span style="color:#808080">000000573BCFBAA0</span></div>
<div class="m" style="top:644px;left:1134px;"><span style="color:#000000">00000000000000C0</span></div>
<div class="m" style="top:655px;left:1011px;"><span style="color:#ff0000">000000573BCFBAA8</span></div>
<div class="m" style="top:655px;left:1134px;"><span style="color:#000000">00007FF9F6C61A40</span></div>
<div class="m" style="top:655px;left:1253px;width:389px;overflow:hidden;"><span style="color:#000000">nppexport.isUnicode</span></div>
<div class="m" style="top:666px;left:1011px;"><span style="color:#808080">000000573BCFBAB0</span></div>
<div class="m" style="top:666px;left:1134px;"><span style="color:#000000">000000573BCFC270</span></div>
<div class="m" style="top:677px;left:1011px;"><span style="color:#808080">000000573BCFBAB8</span></div>
<div class="m" style="top:677px;left:1134px;"><span style="color:#000000">00000177A9320890</span></div>
<div class="m" style="top:688px;left:1011px;"><span style="color:#808080">000000573BCFBAC0</span></div>
<div class="m" style="top:688px;left:1134px;"><span style="color:#000000">00000177AE90F000</span></div>
<div class="m" style="top:699px;left:1011px;"><span style="color:#808080">000000573BCFBAC8</span></div>
<div class="m" style="top:699px;left:1134px;"><span style="color:#000000">00000177AE90F000</span></div>
<div class="m" style="top:710px;left:1011px;"><span style="color:#808080">000000573BCFBAD0</span></div>
<div class="m" style="top:710px;left:1134px;"><span style="color:#000000">00000000AB974F90</span></div>
<div class="m" style="top:721px;left:1011px;"><span style="color:#808080">000000573BCFBAD8</span></div>
<div class="m" style="top:721px;left:1134px;"><span style="color:#000000">00000177AB97F2CA</span></div>
<div class="m" style="top:721px;left:1253px;width:389px;overflow:hidden;"><span style="color:#000000">L"NppExport.dll"</span></div>
<div class="m" style="top:732px;left:1011px;"><span style="color:#808080">000000573BCFBAE0</span></div>
<div class="m" style="top:732px;left:1134px;"><span style="color:#000000">0000000000000000</span></div>
<div class="m" style="top:743px;left:1011px;"><span style="color:#808080">000000573BCFBAE8</span></div>
<div class="m" style="top:743px;left:1134px;"><span style="color:#000000">0000000006040002</span></div>
<div class="m" style="top:754px;left:1011px;"><span style="color:#808080">000000573BCFBAF0</span></div>
<div class="m" style="top:754px;left:1134px;"><span style="color:#000000">0000000000000006</span></div>
<div class="m" style="top:765px;left:1011px;"><span style="color:#808080">000000573BCFBAF8</span></div>
<div class="m" style="top:765px;left:1134px;"><span style="color:#000000">00000177AB97F270</span></div>
<div class="m" style="top:765px;left:1253px;width:389px;overflow:hidden;"><span style="color:#000000">L"C:\\Program Files\\Notepad++\\plugins\\NppExport\\NppExport.dll"</span></div>
<div class="m" style="top:776px;left:1011px;"><span style="color:#808080">000000573BCFBB00</span></div>
<div class="m" style="top:776px;left:1134px;"><span style="color:#000000">00000177AE910830</span></div>
<div class="m" style="top:787px;left:1011px;"><span style="color:#808080">000000573BCFBB08</span></div>
<div class="m" style="top:787px;left:1134px;"><span style="color:#000000">000000000000001B</span></div>
<div class="m" style="top:798px;left:1011px;"><span style="color:#808080">000000573BCFBB10</span></div>
<div class="m" style="top:798px;left:1134px;"><span style="color:#000000">00000177AB871BC0</span></div>
<div class="m" style="top:798px;left:1253px;width:389px;overflow:hidden;"><span style="color:#000000">L"^\n"</span></div>
<div class="m" style="top:809px;left:1011px;"><span style="color:#808080">000000573BCFBB18</span></div>
<div class="m" style="top:809px;left:1134px;"><span style="color:#000000">00000177AB97F270</span></div>
<div class="m" style="top:809px;left:1253px;width:389px;overflow:hidden;"><span style="color:#000000">L"C:\\Program Files\\Notepad++\\plugins\\NppExport\\NppExport.dll"</span></div>
<div class="m" style="top:820px;left:1011px;"><span style="color:#808080">000000573BCFBB20</span></div>
<div class="m" style="top:820px;left:1134px;"><span style="color:#000000">00000177AE910830</span></div>
<div class="m" style="top:831px;left:1011px;"><span style="color:#808080">000000573BCFBB28</span></div>
<div class="m" style="top:831px;left:1134px;"><span style="color:#000000">00000177A92F0000</span></div>
<div style="left:1128px;top:633px;width:2px;height:209px;background:#000"></div>
<div style="left:1128px;top:633px;width:5px;height:2px;background:#000"></div>
<div style="left:1643px;top:632px;width:16px;height:211px;background:#f0f0f0"></div>
<div style="left:1644px;top:762px;width:15px;height:18px;background:#cdcdcd"></div>
<svg width="1667" height="906" style="position:absolute;left:0;top:0"><path d="M1647.6 642.785 L1651 639.215 L1654.4 642.785" stroke="#505050" stroke-width="2.1" fill="none"/></svg>
<svg width="1667" height="906" style="position:absolute;left:0;top:0"><path d="M1647.6 832.215 L1651 835.785 L1654.4 832.215" stroke="#505050" stroke-width="2.1" fill="none"/></svg>
<div style="left:1007px;top:843px;width:652px;height:17px;background:#f0f0f0"></div>
<div style="left:1024px;top:845px;width:173px;height:13px;background:#cdcdcd"></div>
<svg width="1667" height="906" style="position:absolute;left:0;top:0"><path d="M1016.785 848.1 L1013.215 851.5 L1016.785 854.9" stroke="#505050" stroke-width="2.1" fill="none"/></svg>
<svg width="1667" height="906" style="position:absolute;left:0;top:0"><path d="M1631.215 848.1 L1634.785 851.5 L1631.215 854.9" stroke="#505050" stroke-width="2.1" fill="none"/></svg>
<div style="left:0px;top:861px;width:1660px;height:24px;background:#f0f0f0"></div>
<div class="s" style="left:2px;top:867px;font-size:10.6px">Command:</div>
<div style="left:56px;top:863px;width:1529px;height:20px;background:#fff;border:1px solid #7a7a7a"></div>
<div class="m" style="top:869px;left:59px;"><span style="color:#a0a0a0">Commands are comma separated (like assembly instructions): mov eax, ebx</span></div>
<div style="left:1585px;top:863px;width:73px;height:20px;background:#e5e5e5;border:1px solid #adadad"></div>
<div class="s" style="left:1588px;top:867px;font-size:11px">Default</div>
<svg width="1667" height="906" style="position:absolute;left:0;top:0"><path d="M1644.0 870.25 L1653.0 870.25 L1648.5 874.75 Z" fill="#000"/></svg>
<div style="left:0px;top:885px;width:1660px;height:21px;background:#c6c6c6"></div>
<div style="left:2px;top:888px;width:64px;height:18px;background:#ffff00;border-top:1px solid #a8a800;border-left:1px solid #a8a800"></div>
<div class="s" style="left:2px;top:890px;font-size:10.5px;color:#ff0000;width:64px;text-align:center">Paused</div>
<div style="left:72px;top:888px;width:1397px;height:18px;background:#c0c0c0;border-top:1px solid #808080;border-left:1px solid #808080"></div>
<div class="s" style="left:76px;top:890px;font-size:10.9px">INT3 breakpoint at &lt;nppexport.isUnicode&gt; (<span style='color:#0000ff;text-decoration:underline'>00007FF9F6C61A40</span>)!</div>
<div style="left:1475px;top:888px;width:184px;height:18px;background:#c0c0c0;border-top:1px solid #808080;border-left:1px solid #808080"></div>
<div class="s" style="left:1478px;top:891px;font-size:10.9px">Time Wasted Debugging: 0:00:22:16</div>
<div class="s" style="left:1352px;top:821px;font-size:20px;line-height:24px;color:rgba(150,150,150,0.55)">Activate Windows</div>
<div class="s" style="left:1352px;top:847px;font-size:14.9px;line-height:18px;color:rgba(150,150,150,0.55)">Go to Settings to activate Windows.</div>
<div style="left:1660px;top:0px;width:7px;height:906px;background:#3a3f41"></div>
<div style="left:135px;top:90px;width:657px;height:20px;border:3px solid #ff2200"></div>
</body></html>
